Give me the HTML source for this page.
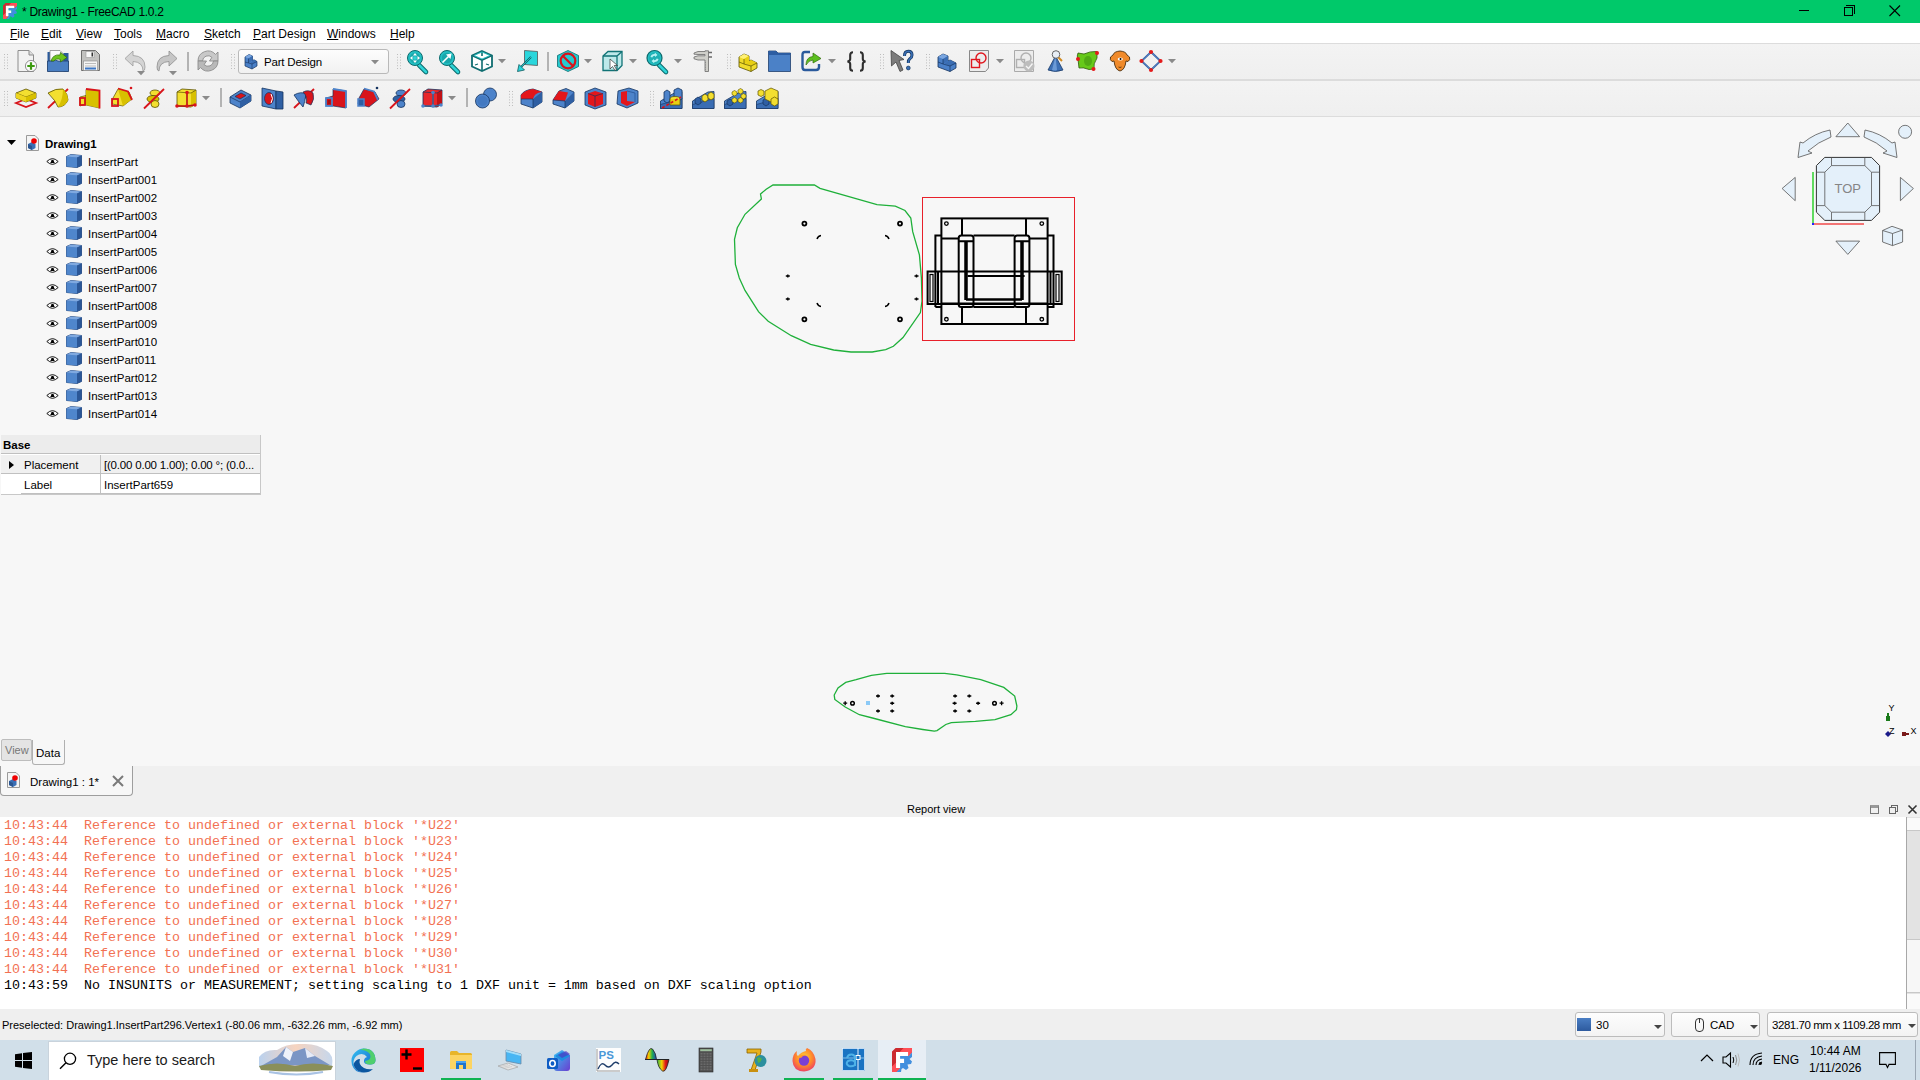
<!DOCTYPE html><html><head><meta charset="utf-8"><style>
*{margin:0;padding:0;box-sizing:border-box}
html,body{width:1920px;height:1080px;overflow:hidden;background:#f7f7f7;font-family:"Liberation Sans",sans-serif;color:#000}
.abs{position:absolute}
.t{position:absolute;white-space:nowrap}
.u{text-decoration:underline;text-underline-offset:1px;text-decoration-thickness:1px}
svg{position:absolute;overflow:visible}
</style></head><body>

<div class="abs" style="left:0;top:0;width:1920px;height:23px;background:#00c96a"></div>
<svg style="left:3px;top:3px" width="14" height="16" viewBox="0 0 20 24" preserveAspectRatio="none"><path d="M0 3.6L3.6 0H20V4.5L16.1 8.4V4.1H4.1V20H8.1L4.5 24H0Z" fill="#cc2a30"/><path d="M11.5 0H20V4.5L16.1 8.4V4.1H7.8Z" fill="#ff5058"/><path d="M0 18.5L4.1 14.5V20H8.1L4.5 24H0Z" fill="#ff5058"/><path d="M4.1 4.1H16.1V8H4.1ZM4.1 8H8.1V20H4.1ZM8.1 10.7H12.1V15.1H8.1Z" fill="#fff"/><path d="M8.1 8H16.5L20 4.5V9L17.5 11L20 13.5L19 16L15.5 16.5L16.5 20L14 22L11 20L9.5 21L9 24H4.5L8.1 20.3V15.1H12.1V10.7H8.1Z" fill="#418fde"/></svg>
<div class="t" style="left:22px;top:4px;font-size:12px;line-height:16px;letter-spacing:-0.3px">* Drawing1 - FreeCAD 1.0.2</div>
<div class="abs" style="left:1799px;top:10px;width:10px;height:1px;background:#000"></div>
<div class="abs" style="left:1844px;top:7px;width:9px;height:9px;border:1px solid #000"></div>
<div class="abs" style="left:1846px;top:5px;width:9px;height:9px;border-top:1px solid #000;border-right:1px solid #000"></div>
<svg style="left:1889px;top:5px" width="12" height="12"><path d="M0.5 0.5L11 11M11 0.5L0.5 11" stroke="#000" stroke-width="1.1"/></svg>
<div class="abs" style="left:0;top:23px;width:1920px;height:20px;background:#fff"></div>
<div class="t" style="left:10px;top:27px;font-size:12px;line-height:15px"><span class="u">F</span>ile</div>
<div class="t" style="left:41px;top:27px;font-size:12px;line-height:15px"><span class="u">E</span>dit</div>
<div class="t" style="left:76px;top:27px;font-size:12px;line-height:15px"><span class="u">V</span>iew</div>
<div class="t" style="left:114px;top:27px;font-size:12px;line-height:15px"><span class="u">T</span>ools</div>
<div class="t" style="left:156px;top:27px;font-size:12px;line-height:15px"><span class="u">M</span>acro</div>
<div class="t" style="left:204px;top:27px;font-size:12px;line-height:15px"><span class="u">S</span>ketch</div>
<div class="t" style="left:253px;top:27px;font-size:12px;line-height:15px"><span class="u">P</span>art Design</div>
<div class="t" style="left:327px;top:27px;font-size:12px;line-height:15px"><span class="u">W</span>indows</div>
<div class="t" style="left:390px;top:27px;font-size:12px;line-height:15px"><span class="u">H</span>elp</div>
<div class="abs" style="left:0;top:43px;width:1920px;height:37px;background:linear-gradient(#f3f3f3,#efefef);border-top:1px solid #dcdcdc"></div>
<div class="abs" style="left:0;top:80px;width:1920px;height:37px;background:linear-gradient(#f3f3f3,#efefef)"></div>
<div class="abs" style="left:0;top:79px;width:1920px;height:2px;background:#dcdcdc"></div>
<div class="abs" style="left:0;top:116px;width:1920px;height:1px;background:#dcdcdc"></div>
<svg style="left:4px;top:54px" width="6" height="16" viewBox="0 0 6 16"><rect x="0" y="0" width="1" height="1" fill="#bdbdbd"/><rect x="0" y="2.8" width="1" height="1" fill="#bdbdbd"/><rect x="0" y="5.6" width="1" height="1" fill="#bdbdbd"/><rect x="0" y="8.4" width="1" height="1" fill="#bdbdbd"/><rect x="0" y="11.2" width="1" height="1" fill="#bdbdbd"/><rect x="0" y="14" width="1" height="1" fill="#bdbdbd"/><rect x="3" y="0" width="1" height="1" fill="#bdbdbd"/><rect x="3" y="2.8" width="1" height="1" fill="#bdbdbd"/><rect x="3" y="5.6" width="1" height="1" fill="#bdbdbd"/><rect x="3" y="8.4" width="1" height="1" fill="#bdbdbd"/><rect x="3" y="11.2" width="1" height="1" fill="#bdbdbd"/><rect x="3" y="14" width="1" height="1" fill="#bdbdbd"/></svg>
<svg style="left:17px;top:50px" width="22" height="22" viewBox="0 0 22 22"><path d="M1 0.5H12L16.5 5V21.5H1Z" fill="#f2f2f2" stroke="#8c8c8c"/><path d="M12 0.5V5H16.5" fill="#ddd" stroke="#8c8c8c"/>
<circle cx="14" cy="16" r="5.6" fill="#fafafa" stroke="#777" stroke-width="0.8"/><path d="M14 12.3V19.7M10.3 16H17.7" stroke="#3c9a10" stroke-width="2.2"/></svg>
<svg style="left:47px;top:50px" width="22" height="22" viewBox="0 0 22 22"><path d="M0.5 2H3L3 21.5H0.5Z" fill="#2a5a9c"/><path d="M3 0.5H13L16.5 4V12H3Z" fill="#fafafa" stroke="#888" stroke-width="0.8"/>
<path d="M16.5 3H21.5V21.5H16.5Z" fill="#2a5a9c"/>
<path d="M0.5 11H6Q9 9.5 11 11H21.5V21.5H0.5Z" fill="#4a7fc2" stroke="#1e3e6b" stroke-width="0.8"/>
<path d="M4 11Q6 4 13 5L13.5 2.5L20 7.5L13.5 12L13.5 9.5Q9 8 7 11Z" fill="#6cc41c" stroke="#2e6a08" stroke-width="0.7"/></svg>
<svg style="left:80px;top:50px" width="22" height="22" viewBox="0 0 22 22"><path d="M1.5 0.5H15.5L19.5 4.5V20.5H1.5Z" fill="#c2c2c0" stroke="#6e6e6e"/><rect x="6" y="1.5" width="8" height="6" fill="#f8f8f8" stroke="#999" stroke-width="0.6"/><rect x="11.5" y="2.5" width="1.5" height="4" fill="#333"/>
<rect x="3.5" y="11" width="14" height="9.5" fill="#f4f4f4" stroke="#888" stroke-width="0.6"/><rect x="5" y="13" width="11" height="1" fill="#bbb"/><rect x="5" y="15.5" width="11" height="1" fill="#bbb"/><rect x="5" y="17.5" width="11" height="2" fill="#3c77c6"/></svg>
<svg style="left:113px;top:54px" width="6" height="16" viewBox="0 0 6 16"><rect x="0" y="0" width="1" height="1" fill="#bdbdbd"/><rect x="0" y="2.8" width="1" height="1" fill="#bdbdbd"/><rect x="0" y="5.6" width="1" height="1" fill="#bdbdbd"/><rect x="0" y="8.4" width="1" height="1" fill="#bdbdbd"/><rect x="0" y="11.2" width="1" height="1" fill="#bdbdbd"/><rect x="0" y="14" width="1" height="1" fill="#bdbdbd"/><rect x="3" y="0" width="1" height="1" fill="#bdbdbd"/><rect x="3" y="2.8" width="1" height="1" fill="#bdbdbd"/><rect x="3" y="5.6" width="1" height="1" fill="#bdbdbd"/><rect x="3" y="8.4" width="1" height="1" fill="#bdbdbd"/><rect x="3" y="11.2" width="1" height="1" fill="#bdbdbd"/><rect x="3" y="14" width="1" height="1" fill="#bdbdbd"/></svg>
<svg style="left:124px;top:50px" width="22" height="22" viewBox="0 0 22 22"><path d="M1 8.5L9 1V5.5Q21 6 21 17Q21 21 19 21Q19 12 9 11.5V16Z" fill="#d4d4d4" stroke="#9c9c9c" stroke-width="0.8"/></svg>
<svg style="left:137px;top:71px" width="8" height="5" viewBox="0 0 8 5"><path d="M0 0H8L4 4.2Z" fill="#8a8a8a"/></svg>
<svg style="left:156px;top:50px" width="22" height="22" viewBox="0 0 22 22"><path d="M21 8.5L13 1V5.5Q1 6 1 17Q1 21 3 21Q3 12 13 11.5V16Z" fill="#c6c6c6" stroke="#8e8e8e" stroke-width="0.8"/></svg>
<svg style="left:169px;top:71px" width="8" height="5" viewBox="0 0 8 5"><path d="M0 0H8L4 4.2Z" fill="#8a8a8a"/></svg>
<div class="abs" style="left:187px;top:52px;width:2px;height:19px;background:#b3b3b3"></div>
<svg style="left:197px;top:50px" width="22" height="22" viewBox="0 0 22 22"><path d="M1 11A10 10 0 0 1 18.5 4.4L21 2V11H12.5L14.9 7.4A5.5 5.5 0 0 0 5.5 11Z" fill="#c8c8c8" stroke="#8c8c8c" stroke-width="0.9"/>
<path d="M21 11A10 10 0 0 1 3.5 17.6L1 20V11H9.5L7.1 14.6A5.5 5.5 0 0 0 16.5 11Z" fill="#b9b9b9" stroke="#8c8c8c" stroke-width="0.9"/></svg>
<svg style="left:231px;top:54px" width="6" height="16" viewBox="0 0 6 16"><rect x="0" y="0" width="1" height="1" fill="#bdbdbd"/><rect x="0" y="2.8" width="1" height="1" fill="#bdbdbd"/><rect x="0" y="5.6" width="1" height="1" fill="#bdbdbd"/><rect x="0" y="8.4" width="1" height="1" fill="#bdbdbd"/><rect x="0" y="11.2" width="1" height="1" fill="#bdbdbd"/><rect x="0" y="14" width="1" height="1" fill="#bdbdbd"/><rect x="3" y="0" width="1" height="1" fill="#bdbdbd"/><rect x="3" y="2.8" width="1" height="1" fill="#bdbdbd"/><rect x="3" y="5.6" width="1" height="1" fill="#bdbdbd"/><rect x="3" y="8.4" width="1" height="1" fill="#bdbdbd"/><rect x="3" y="11.2" width="1" height="1" fill="#bdbdbd"/><rect x="3" y="14" width="1" height="1" fill="#bdbdbd"/></svg>
<div class="abs" style="left:238px;top:49px;width:151px;height:25px;background:linear-gradient(#fdfdfd,#f1f1f1);border:1px solid #b9b9b9;border-radius:3px"></div>
<svg style="left:244px;top:53px" width="14" height="17" viewBox="0 0 14 17"><path d="M1 4L5 1.5L8.5 3V7.5L10 6.8L13 8.5V13L8 16L1 13Z" fill="#4a80c8" stroke="#15335e" stroke-width="0.7"/><path d="M1 4L5 1.5L8.5 3L4.5 5.5Z" fill="#7aa6e0"/><path d="M4.5 5.5L8.5 3V7.5L4.5 10ZM10 6.8L13 8.5L8 11L6 10Z" fill="#3a6db3"/><path d="M4.5 5.5V10L1 9M4.5 10L8 11V16M8 11L13 8.5" fill="none" stroke="#15335e" stroke-width="0.6"/></svg>
<div class="t" style="left:264px;top:55px;font-size:11.5px;line-height:14px;letter-spacing:-0.2px">Part Design</div>
<svg style="left:371px;top:60px" width="8" height="5" viewBox="0 0 8 5"><path d="M0 0H8L4 4.2Z" fill="#8a8a8a"/></svg>
<svg style="left:397px;top:54px" width="6" height="16" viewBox="0 0 6 16"><rect x="0" y="0" width="1" height="1" fill="#bdbdbd"/><rect x="0" y="2.8" width="1" height="1" fill="#bdbdbd"/><rect x="0" y="5.6" width="1" height="1" fill="#bdbdbd"/><rect x="0" y="8.4" width="1" height="1" fill="#bdbdbd"/><rect x="0" y="11.2" width="1" height="1" fill="#bdbdbd"/><rect x="0" y="14" width="1" height="1" fill="#bdbdbd"/><rect x="3" y="0" width="1" height="1" fill="#bdbdbd"/><rect x="3" y="2.8" width="1" height="1" fill="#bdbdbd"/><rect x="3" y="5.6" width="1" height="1" fill="#bdbdbd"/><rect x="3" y="8.4" width="1" height="1" fill="#bdbdbd"/><rect x="3" y="11.2" width="1" height="1" fill="#bdbdbd"/><rect x="3" y="14" width="1" height="1" fill="#bdbdbd"/></svg>
<svg style="left:406px;top:50px" width="22" height="22" viewBox="0 0 22 22"><path d="M13 15L20 22" stroke="#0c6a6d" stroke-width="4.6" stroke-linecap="round"/><path d="M13 15L20 22" stroke="#2ed3d6" stroke-width="2.6" stroke-linecap="round"/>
<circle cx="9" cy="8" r="7.5" fill="#22bfc3" stroke="#0c6a6d" stroke-width="1"/><circle cx="9" cy="8" r="5.2" fill="#1aa7ab"/>
<path d="M9 3L11 5.5H7ZM9 13L11 10.5H7ZM4 8L6.5 6V10ZM14 8L11.5 6V10Z" fill="#fff"/><rect x="7.3" y="6.3" width="3.4" height="3.4" fill="#2ed3d6"/></svg>
<svg style="left:438px;top:50px" width="22" height="22" viewBox="0 0 22 22"><path d="M13 15L20 22" stroke="#0c6a6d" stroke-width="4.6" stroke-linecap="round"/><path d="M13 15L20 22" stroke="#2ed3d6" stroke-width="2.6" stroke-linecap="round"/>
<circle cx="9" cy="8" r="7.5" fill="#22bfc3" stroke="#0c6a6d" stroke-width="1"/><circle cx="9" cy="8" r="5.2" fill="#1aa7ab"/>
<path d="M4.5 12.5L10.5 6.5" stroke="#fff" stroke-width="1.6"/><path d="M13.5 3.5L8 4.5L12.5 9Z" fill="#fff"/></svg>
<svg style="left:471px;top:50px" width="22" height="22" viewBox="0 0 22 22"><path d="M11 1L21 5.5V16.5L11 21L1 16.5V5.5Z" fill="#fff" stroke="#0f6d70" stroke-width="1.8"/><path d="M1 5.5L11 10L21 5.5M11 10V21M11 1V6" fill="none" stroke="#0f6d70" stroke-width="1.6"/>
<path d="M3 5.5L11 2L19 5.5L11 9Z" fill="none" stroke="#22bfc3" stroke-width="0.9"/><path d="M4 15L7 14M15 14L18 15" stroke="#0f6d70" stroke-width="1.2"/></svg>
<svg style="left:498px;top:59px" width="8" height="5" viewBox="0 0 8 5"><path d="M0 0H8L4 4.2Z" fill="#8a8a8a"/></svg>
<svg style="left:517px;top:50px" width="22" height="22" viewBox="0 0 22 22"><path d="M7.5 0.5L20.5 1.5V15.5L7.5 14.5Z" fill="#2ad6dc" stroke="#555" stroke-width="0.8"/>
<path d="M14 7L3 18" stroke="#0f5b5e" stroke-width="1.8"/><path d="M14 7L3 18" stroke="#2ad6dc" stroke-width="0.8"/><path d="M0.5 21.5L2 14.5L7.5 20Z" fill="#2ad6dc" stroke="#0f5b5e" stroke-width="0.8"/></svg>
<div class="abs" style="left:547px;top:52px;width:2px;height:19px;background:#b3b3b3"></div>
<svg style="left:557px;top:50px" width="22" height="22" viewBox="0 0 22 22"><path d="M11 0.5L21.5 5.5V16.5L11 21.5L0.5 16.5V5.5Z" fill="#24cbd0" stroke="#0c6b6e" stroke-width="0.8"/>
<circle cx="11" cy="11" r="7.3" fill="none" stroke="#d8141b" stroke-width="2.2"/><path d="M6 6L16 16" stroke="#d8141b" stroke-width="2.2"/></svg>
<svg style="left:584px;top:59px" width="8" height="5" viewBox="0 0 8 5"><path d="M0 0H8L4 4.2Z" fill="#8a8a8a"/></svg>
<svg style="left:602px;top:50px" width="22" height="22" viewBox="0 0 22 22"><path d="M1 6L6 1.5H20L20 15.5L15 20.5H1Z" fill="#bde9ea" stroke="#117376" stroke-width="1.3"/><path d="M1 6H15V20.5M15 6L20 1.5" fill="none" stroke="#117376" stroke-width="1.3"/>
<path d="M8 9L8 19L10.5 16.5L13 20.5L14.5 19.5L12.2 15.5L15.5 15.5Z" fill="#fff" stroke="#333" stroke-width="0.7"/></svg>
<svg style="left:629px;top:59px" width="8" height="5" viewBox="0 0 8 5"><path d="M0 0H8L4 4.2Z" fill="#8a8a8a"/></svg>
<svg style="left:645px;top:50px" width="22" height="22" viewBox="0 0 22 22"><path d="M14 15L21 22" stroke="#0c6a6d" stroke-width="4.6" stroke-linecap="round"/><path d="M14 15L21 22" stroke="#2ed3d6" stroke-width="2.6" stroke-linecap="round"/>
<circle cx="9.5" cy="8" r="7.5" fill="#22bfc3" stroke="#0c6a6d" stroke-width="1.2"/><circle cx="9.5" cy="8" r="5.5" fill="#1fb0b4"/>
<path d="M5.5 7Q6 4 9.5 4L10 2.8L12.5 5L10 7L10 5.8Q7.5 6 7.3 7.5Z" fill="#b5f1f2"/><path d="M13.5 9Q13 12 9.5 12L9 13.2L6.5 11L9 9L9 10.2Q11.5 10 11.7 8.5Z" fill="#b5f1f2"/></svg>
<svg style="left:674px;top:59px" width="8" height="5" viewBox="0 0 8 5"><path d="M0 0H8L4 4.2Z" fill="#8a8a8a"/></svg>
<svg style="left:693px;top:50px" width="20" height="22" viewBox="0 0 20 22"><path d="M1 3L5 1.5H12V0.8H15.5V21.5H12V10H5L1 8.8V7L5 5.8H12V4.5H5L1 4.2Z" fill="#cfcfca" stroke="#6a6a6a" stroke-width="0.8"/>
<path d="M15.5 2.5H19M15.5 7H19" stroke="#6a6a6a" stroke-width="1.6"/><path d="M12.5 12V20" stroke="#8a8a8a" stroke-width="1" stroke-dasharray="1 1.4"/></svg>
<svg style="left:727px;top:54px" width="6" height="16" viewBox="0 0 6 16"><rect x="0" y="0" width="1" height="1" fill="#bdbdbd"/><rect x="0" y="2.8" width="1" height="1" fill="#bdbdbd"/><rect x="0" y="5.6" width="1" height="1" fill="#bdbdbd"/><rect x="0" y="8.4" width="1" height="1" fill="#bdbdbd"/><rect x="0" y="11.2" width="1" height="1" fill="#bdbdbd"/><rect x="0" y="14" width="1" height="1" fill="#bdbdbd"/><rect x="3" y="0" width="1" height="1" fill="#bdbdbd"/><rect x="3" y="2.8" width="1" height="1" fill="#bdbdbd"/><rect x="3" y="5.6" width="1" height="1" fill="#bdbdbd"/><rect x="3" y="8.4" width="1" height="1" fill="#bdbdbd"/><rect x="3" y="11.2" width="1" height="1" fill="#bdbdbd"/><rect x="3" y="14" width="1" height="1" fill="#bdbdbd"/></svg>
<svg style="left:738px;top:50px" width="20" height="22" viewBox="0 0 20 22"><path d="M1 7L6 4L11 6V11L13 10L19 13V18L13 21.5L1 17Z" fill="#f0dc2c" stroke="#5a5000" stroke-width="0.8"/>
<path d="M1 7L6 4L11 6L6 9Z" fill="#fff176"/><path d="M6 9L11 6V11L6 14ZM13 10L19 13L13 16L7.5 13.5Z" fill="#e8cf12"/><path d="M6 9V14M1 12L6 14L13 16V21.5M13 16L19 13" fill="none" stroke="#5a5000" stroke-width="0.7"/></svg>
<svg style="left:768px;top:50px" width="23" height="22" viewBox="0 0 23 22"><path d="M0.5 1H8L10 3H22.5V21.5H0.5Z" fill="#4b81c7" stroke="#1f3f6d" stroke-width="0.8"/><path d="M0.5 1H8L10 3H22.5V5H0.5Z" fill="#2c5da2"/></svg>
<svg style="left:801px;top:50px" width="22" height="22" viewBox="0 0 22 22"><path d="M9 2H4Q1.5 2 1.5 5V17Q1.5 20 4 20H15Q18 20 18 17V14" fill="none" stroke="#2a5a9c" stroke-width="2.4"/>
<path d="M5 15Q5 7 12 6.5V3L20 8.5L12 13V10Q8 10 5 15Z" fill="#5cbf1e" stroke="#2e6a08" stroke-width="0.7"/></svg>
<svg style="left:828px;top:59px" width="8" height="5" viewBox="0 0 8 5"><path d="M0 0H8L4 4.2Z" fill="#8a8a8a"/></svg>
<svg style="left:846px;top:51px" width="21" height="21" viewBox="0 0 21 21"><path d="M7 1.2Q4.2 1.2 4.2 4V8Q4.2 10 1.5 10.5Q4.2 11 4.2 13V17Q4.2 19.8 7 19.8M14 1.2Q16.8 1.2 16.8 4V8Q16.8 10 19.5 10.5Q16.8 11 16.8 13V17Q16.8 19.8 14 19.8" fill="none" stroke="#2e2e2e" stroke-width="2.1"/></svg>
<svg style="left:880px;top:54px" width="6" height="16" viewBox="0 0 6 16"><rect x="0" y="0" width="1" height="1" fill="#bdbdbd"/><rect x="0" y="2.8" width="1" height="1" fill="#bdbdbd"/><rect x="0" y="5.6" width="1" height="1" fill="#bdbdbd"/><rect x="0" y="8.4" width="1" height="1" fill="#bdbdbd"/><rect x="0" y="11.2" width="1" height="1" fill="#bdbdbd"/><rect x="0" y="14" width="1" height="1" fill="#bdbdbd"/><rect x="3" y="0" width="1" height="1" fill="#bdbdbd"/><rect x="3" y="2.8" width="1" height="1" fill="#bdbdbd"/><rect x="3" y="5.6" width="1" height="1" fill="#bdbdbd"/><rect x="3" y="8.4" width="1" height="1" fill="#bdbdbd"/><rect x="3" y="11.2" width="1" height="1" fill="#bdbdbd"/><rect x="3" y="14" width="1" height="1" fill="#bdbdbd"/></svg>
<svg style="left:890px;top:50px" width="23" height="22" viewBox="0 0 23 22"><path d="M1 0.5L14 9.5L9 10.5L13 20L10 21.5L6 12L1.5 16Z" fill="#7b7b7b" stroke="#444" stroke-width="0.8"/>
<path d="M14.5 6Q14.5 1.2 18.3 1.2Q22 1.2 22 5Q22 7.5 19.8 8.8Q18.3 9.8 18.3 13" fill="none" stroke="#14365f" stroke-width="3"/><path d="M14.5 6Q14.5 1.2 18.3 1.2Q22 1.2 22 5Q22 7.5 19.8 8.8Q18.3 9.8 18.3 13" fill="none" stroke="#3a6fb5" stroke-width="1.6"/><circle cx="18.3" cy="18" r="1.9" fill="#3a6fb5" stroke="#14365f" stroke-width="0.7"/></svg>
<svg style="left:926px;top:54px" width="6" height="16" viewBox="0 0 6 16"><rect x="0" y="0" width="1" height="1" fill="#bdbdbd"/><rect x="0" y="2.8" width="1" height="1" fill="#bdbdbd"/><rect x="0" y="5.6" width="1" height="1" fill="#bdbdbd"/><rect x="0" y="8.4" width="1" height="1" fill="#bdbdbd"/><rect x="0" y="11.2" width="1" height="1" fill="#bdbdbd"/><rect x="0" y="14" width="1" height="1" fill="#bdbdbd"/><rect x="3" y="0" width="1" height="1" fill="#bdbdbd"/><rect x="3" y="2.8" width="1" height="1" fill="#bdbdbd"/><rect x="3" y="5.6" width="1" height="1" fill="#bdbdbd"/><rect x="3" y="8.4" width="1" height="1" fill="#bdbdbd"/><rect x="3" y="11.2" width="1" height="1" fill="#bdbdbd"/><rect x="3" y="14" width="1" height="1" fill="#bdbdbd"/></svg>
<svg style="left:937px;top:50px" width="20" height="22" viewBox="0 0 20 22"><path d="M1 7L6 4L11 6V11L13 10L19 13V18L13 21.5L1 17Z" fill="#4a80c8" stroke="#15335e" stroke-width="0.8"/>
<path d="M1 7L6 4L11 6L6 9Z" fill="#7aa6e0"/><path d="M6 9L11 6V11L6 14ZM13 10L19 13L13 16L7.5 13.5Z" fill="#3a6db3"/><path d="M6 9V14M1 12L6 14L13 16V21.5M13 16L19 13" fill="none" stroke="#15335e" stroke-width="0.7"/></svg>
<svg style="left:969px;top:50px" width="20" height="22" viewBox="0 0 20 22"><path d="M0.5 0.5H19.5V18L16.5 21.5H0.5Z" fill="#ececec" stroke="#888"/><rect x="2.5" y="9.5" width="8" height="8" fill="none" stroke="#e0161e" stroke-width="1.4"/><circle cx="12" cy="8" r="5" fill="none" stroke="#e0161e" stroke-width="1.4"/></svg>
<svg style="left:996px;top:59px" width="8" height="5" viewBox="0 0 8 5"><path d="M0 0H8L4 4.2Z" fill="#8a8a8a"/></svg>
<svg style="left:1014px;top:50px" width="22" height="22" viewBox="0 0 22 22"><path d="M0.5 0.5H19.5V21.5H0.5Z" fill="#ececec" stroke="#aaa"/><rect x="2.5" y="9.5" width="8" height="8" fill="none" stroke="#b0b0b0" stroke-width="1.4"/><circle cx="12" cy="8" r="5" fill="none" stroke="#b0b0b0" stroke-width="1.4"/>
<circle cx="15" cy="16" r="5.5" fill="#bdbdbd"/><path d="M12 16L14.5 18.5L18.5 13.5" fill="none" stroke="#f4f4f4" stroke-width="1.4"/></svg>
<svg style="left:1047px;top:50px" width="18" height="22" viewBox="0 0 18 22"><path d="M8.5 6L1 20Q8.5 23 16 20Z" fill="#3c6fb4" stroke="#1b3b68" stroke-width="0.8"/><path d="M8.5 6L5 20Q8 21 10 20Z" fill="#6b9ad6"/>
<circle cx="9" cy="4.5" r="3.8" fill="#e8eef5" stroke="#555" stroke-width="0.9"/><path d="M11.5 7.5L15 11" stroke="#d08a20" stroke-width="2"/></svg>
<svg style="left:1076px;top:50px" width="23" height="22" viewBox="0 0 23 22"><path d="M2 3L8 4Q14 1 21 1.5L21 8Q17 14 18 19L13 19.5Q7 17 3 18L2 9Q0.5 6 2 3Z" fill="#66c919" stroke="#2d5a08" stroke-width="0.8"/><ellipse cx="12" cy="11" rx="4" ry="5" fill="#3c8c10" opacity="0.5"/>
<circle cx="21" cy="3" r="2" fill="#e41b1b"/><circle cx="2" cy="9" r="2" fill="#e41b1b"/><circle cx="17.5" cy="19" r="2" fill="#e41b1b"/></svg>
<svg style="left:1109px;top:50px" width="22" height="22" viewBox="0 0 22 22"><path d="M11 1Q5 1.5 4 5L1.5 7Q0.5 10 3 11.5L5 11Q6 20 11 21Q16 20 17 11L19 11.5Q21.5 10 20.5 7L18 5Q17 1.5 11 1Z" fill="#f08a2a" stroke="#3a2000" stroke-width="0.8"/>
<ellipse cx="11.3" cy="9" rx="2.6" ry="1.6" fill="#fff"/><circle cx="11.5" cy="9" r="1" fill="#000"/><path d="M9.5 17Q11 18 12.5 17" stroke="#3a2000" fill="none" stroke-width="0.7"/></svg>
<svg style="left:1140px;top:50px" width="22" height="22" viewBox="0 0 22 22"><path d="M11 2L20.5 11L11 20L1.5 11Z" fill="none" stroke="#2d5aa0" stroke-width="1.8"/><path d="M11 2L20.5 11L11 20L1.5 11Z" fill="none" stroke="#7aa6e0" stroke-width="0.6"/>
<circle cx="11" cy="2" r="2.1" fill="#e41b1b"/><circle cx="20.5" cy="11" r="2.1" fill="#e41b1b"/><circle cx="11" cy="20" r="2.1" fill="#e41b1b"/><circle cx="1.5" cy="11" r="2.1" fill="#e41b1b"/></svg>
<svg style="left:1168px;top:59px" width="8" height="5" viewBox="0 0 8 5"><path d="M0 0H8L4 4.2Z" fill="#8a8a8a"/></svg>
<svg style="left:4px;top:91px" width="6" height="16" viewBox="0 0 6 16"><rect x="0" y="0" width="1" height="1" fill="#bdbdbd"/><rect x="0" y="2.8" width="1" height="1" fill="#bdbdbd"/><rect x="0" y="5.6" width="1" height="1" fill="#bdbdbd"/><rect x="0" y="8.4" width="1" height="1" fill="#bdbdbd"/><rect x="0" y="11.2" width="1" height="1" fill="#bdbdbd"/><rect x="0" y="14" width="1" height="1" fill="#bdbdbd"/><rect x="3" y="0" width="1" height="1" fill="#bdbdbd"/><rect x="3" y="2.8" width="1" height="1" fill="#bdbdbd"/><rect x="3" y="5.6" width="1" height="1" fill="#bdbdbd"/><rect x="3" y="8.4" width="1" height="1" fill="#bdbdbd"/><rect x="3" y="11.2" width="1" height="1" fill="#bdbdbd"/><rect x="3" y="14" width="1" height="1" fill="#bdbdbd"/></svg>
<svg style="left:15px;top:87px" width="22" height="22" viewBox="0 0 22 22"><path d="M1 16L11 12L21 16L11 20Z" fill="none" stroke="#d8141b" stroke-width="1.8"/><path d="M1 6L11 2L21 6V11L11 15L1 11Z" fill="#f3df30" stroke="#5b5000" stroke-width="0.8"/>
<path d="M1 6L11 10L21 6M11 10V15" fill="none" stroke="#5b5000" stroke-width="0.7"/><path d="M11 10L21 6V11L11 15Z" fill="#d8c000"/><path d="M1 6L11 10V15L1 11Z" fill="#eed620"/></svg>
<svg style="left:47px;top:87px" width="22" height="22" viewBox="0 0 22 22"><path d="M1 21L21 2" stroke="#d8141b" stroke-width="1.8"/><path d="M1 6Q9 1 16 2Q21 7 21 13Q18 20 11 20Q9 14 1 6Z" fill="#f3df30" stroke="#5b5000" stroke-width="0.8"/><path d="M16 2Q21 7 21 13Q18 20 11 20Q16 12 16 2Z" fill="#d8c000"/></svg>
<svg style="left:79px;top:87px" width="22" height="22" viewBox="0 0 22 22"><path d="M7 2.5L20.5 4V21L7 18ZM1 10L7 8.5V17L1 19Z" fill="#f3df30" stroke="#5b5000" stroke-width="0.7"/><path d="M7 2.5L20.5 4V21L7 18Z" fill="#d8c000"/><path d="M7 2L20.5 3.5V21.5" fill="none" stroke="#d8141b" stroke-width="1.8"/><rect x="1" y="11" width="5" height="7" fill="none" stroke="#d8141b" stroke-width="1.8"/></svg>
<svg style="left:111px;top:87px" width="22" height="22" viewBox="0 0 22 22"><path d="M7 2L18 5L21 12L12 19L1 17L2 11Z" fill="#f3df30" stroke="#5b5000" stroke-width="0.7"/><path d="M7 2L18 5L21 12L12 19Z" fill="#d8c000"/><path d="M7 1.5L17 4.5L21 13" fill="none" stroke="#d8141b" stroke-width="1.8"/><rect x="1" y="12" width="6" height="7" fill="none" stroke="#d8141b" stroke-width="1.8"/><circle cx="20" cy="1" r="1.3" fill="#d8141b"/></svg>
<svg style="left:143px;top:87px" width="22" height="22" viewBox="0 0 22 22"><ellipse cx="12" cy="6" rx="5" ry="3" fill="#f3df30" stroke="#5b5000" stroke-width="0.8"/><ellipse cx="10" cy="12" rx="6" ry="3.5" fill="#d8c000" stroke="#5b5000" stroke-width="0.8"/><ellipse cx="12" cy="17" rx="4" ry="3.5" fill="#f3df30" stroke="#5b5000" stroke-width="0.8"/><path d="M1 21.5L21 2" stroke="#d8141b" stroke-width="1.8"/></svg>
<svg style="left:175px;top:87px" width="22" height="22" viewBox="0 0 22 22"><path d="M2 5L7 2L21 3V17L16 20L2 19Z" fill="#f3df30" stroke="#5b5000" stroke-width="0.8"/><path d="M16 6L21 3V17L16 20Z" fill="#d8c000"/><path d="M2 5L16 6L21 3" fill="none" stroke="#5b5000" stroke-width="0.7"/>
<path d="M12 5.5V19M2 19H12L20 18" stroke="#b80e14" stroke-width="1.6" fill="none"/><circle cx="12" cy="5.5" r="1.8" fill="#d8141b"/><circle cx="2" cy="19" r="1.8" fill="#d8141b"/><circle cx="12" cy="19" r="1.8" fill="#d8141b"/><circle cx="20" cy="18" r="1.8" fill="#d8141b"/></svg>
<svg style="left:202px;top:96px" width="8" height="5" viewBox="0 0 8 5"><path d="M0 0H8L4 4.2Z" fill="#8a8a8a"/></svg>
<div class="abs" style="left:220px;top:88px;width:2px;height:19px;background:#b3b3b3"></div>
<svg style="left:229px;top:87px" width="22" height="22" viewBox="0 0 22 22"><path d="M1 10L12 3L22 8V14L11 21L1 16Z" fill="#4d83ca" stroke="#15335e" stroke-width="0.8"/><path d="M1 10L11 15L22 8" fill="none" stroke="#15335e" stroke-width="0.7"/><path d="M11 15V21L22 14V8Z" fill="#2f5fa3"/><path d="M6 9.5L12 6L17 8.5L11 12Z" fill="#d8141b" stroke="#15335e" stroke-width="0.7"/></svg>
<svg style="left:261px;top:87px" width="22" height="22" viewBox="0 0 22 22"><path d="M1 1L15 4V22L1 19Z" fill="#4d83ca" stroke="#15335e" stroke-width="0.8"/><path d="M15 4L22 5V22H15Z" fill="#2f5fa3" stroke="#15335e" stroke-width="0.8"/><ellipse cx="8" cy="11.5" rx="4.5" ry="6" fill="#d8141b" stroke="#15335e" stroke-width="0.7"/><path d="M10 7Q13 11.5 10 16" stroke="#fff" stroke-width="1" fill="none"/></svg>
<svg style="left:293px;top:87px" width="22" height="22" viewBox="0 0 22 22"><path d="M1 21L21 2" stroke="#d8141b" stroke-width="1.8"/><path d="M1 8Q8 4 13 7Q12 15 10 20Q5 14 1 8Z" fill="#4d83ca" stroke="#15335e" stroke-width="0.8"/><path d="M10 5Q16 2 20 6Q22 12 18 18L13 16Q15 10 10 5Z" fill="#d8141b" stroke="#15335e" stroke-width="0.7"/></svg>
<svg style="left:325px;top:87px" width="22" height="22" viewBox="0 0 22 22"><path d="M8 2L21 4V21L8 19L1 18V11L8 9Z" fill="#d8141b" stroke="#15335e" stroke-width="0.7"/><path d="M8 2L21 4V21" fill="none" stroke="#4d83ca" stroke-width="1.8"/><rect x="1" y="11" width="6" height="8" fill="none" stroke="#4d83ca" stroke-width="1.8"/><rect x="2.5" y="13" width="3" height="4" fill="#a80c10"/></svg>
<svg style="left:357px;top:87px" width="22" height="22" viewBox="0 0 22 22"><path d="M7 2L18 5L22 12L12 20L1 17L2 11Z" fill="#d8141b" stroke="#15335e" stroke-width="0.7"/><path d="M7 1.5L17 4.5L21 13" fill="none" stroke="#4d83ca" stroke-width="1.8"/><rect x="1" y="12" width="6" height="7" fill="#2f5fa3" stroke="#4d83ca" stroke-width="1.5"/><circle cx="20" cy="1" r="1.3" fill="#15335e"/></svg>
<svg style="left:389px;top:87px" width="22" height="22" viewBox="0 0 22 22"><ellipse cx="12" cy="6" rx="5" ry="3" fill="#4d83ca" stroke="#15335e" stroke-width="0.8"/><ellipse cx="10" cy="12" rx="6" ry="3.5" fill="#2f5fa3" stroke="#15335e" stroke-width="0.8"/><ellipse cx="12" cy="17" rx="4" ry="3.5" fill="#4d83ca" stroke="#15335e" stroke-width="0.8"/><path d="M1 21.5L21 2" stroke="#d8141b" stroke-width="1.8"/></svg>
<svg style="left:421px;top:87px" width="22" height="22" viewBox="0 0 22 22"><path d="M2 5L7 2L21 3V17L16 20L2 19Z" fill="#e8262a" stroke="#15335e" stroke-width="0.8"/><path d="M16 6L21 3V17L16 20Z" fill="#c01015"/><path d="M2 5L16 6L21 3" fill="none" stroke="#15335e" stroke-width="0.7"/>
<path d="M12 5.5V19M2 19H12L20 18" stroke="#3b5f91" stroke-width="1.6" fill="none"/><circle cx="12" cy="5.5" r="1.8" fill="#4d83ca"/><circle cx="2" cy="19" r="1.8" fill="#4d83ca"/><circle cx="12" cy="19" r="1.8" fill="#4d83ca"/><circle cx="20" cy="18" r="1.8" fill="#4d83ca"/></svg>
<svg style="left:448px;top:96px" width="8" height="5" viewBox="0 0 8 5"><path d="M0 0H8L4 4.2Z" fill="#8a8a8a"/></svg>
<div class="abs" style="left:466px;top:88px;width:2px;height:19px;background:#b3b3b3"></div>
<svg style="left:475px;top:87px" width="22" height="22" viewBox="0 0 22 22"><circle cx="15" cy="7.5" r="6.5" fill="#4d83ca" stroke="#15335e" stroke-width="0.8"/><circle cx="7.5" cy="14" r="7" fill="#4d83ca" stroke="#15335e" stroke-width="0.8"/><circle cx="7.5" cy="14" r="5" fill="#3a70b8" opacity="0.5"/></svg>
<svg style="left:509px;top:91px" width="6" height="16" viewBox="0 0 6 16"><rect x="0" y="0" width="1" height="1" fill="#bdbdbd"/><rect x="0" y="2.8" width="1" height="1" fill="#bdbdbd"/><rect x="0" y="5.6" width="1" height="1" fill="#bdbdbd"/><rect x="0" y="8.4" width="1" height="1" fill="#bdbdbd"/><rect x="0" y="11.2" width="1" height="1" fill="#bdbdbd"/><rect x="0" y="14" width="1" height="1" fill="#bdbdbd"/><rect x="3" y="0" width="1" height="1" fill="#bdbdbd"/><rect x="3" y="2.8" width="1" height="1" fill="#bdbdbd"/><rect x="3" y="5.6" width="1" height="1" fill="#bdbdbd"/><rect x="3" y="8.4" width="1" height="1" fill="#bdbdbd"/><rect x="3" y="11.2" width="1" height="1" fill="#bdbdbd"/><rect x="3" y="14" width="1" height="1" fill="#bdbdbd"/></svg>
<svg style="left:520px;top:87px" width="22" height="22" viewBox="0 0 22 22"><path d="M1 8Q4 3 13 2L22 5V15L13 21L1 17Z" fill="#4d83ca" stroke="#15335e" stroke-width="0.8"/><path d="M1 8Q5 3 13 2L22 5Q14 6 13 12L1 12Z" fill="#e3161b"/><path d="M13 12L22 5V15L13 21Z" fill="#2f5fa3"/><path d="M1 12H13V21" fill="none" stroke="#15335e" stroke-width="0.7"/></svg>
<svg style="left:552px;top:87px" width="22" height="22" viewBox="0 0 22 22"><path d="M1 13L7 4L14 1.5L22 5V14L13 21L1 17Z" fill="#4d83ca" stroke="#15335e" stroke-width="0.8"/><path d="M1 13L7 4L16 5.5L13 14Z" fill="#e3161b"/><path d="M13 14L22 5V14L13 21Z" fill="#2f5fa3"/><path d="M1 13L13 14V21" fill="none" stroke="#15335e" stroke-width="0.7"/></svg>
<svg style="left:584px;top:87px" width="22" height="22" viewBox="0 0 22 22"><path d="M1 5L11 1L22 5V18L11 22L1 18Z" fill="#4d83ca" stroke="#15335e" stroke-width="0.8"/><path d="M4 6.5L11 4L19 6.5V17L11 20L4 17Z" fill="#e3161b"/><path d="M11 9V20M4 6.5L11 9L19 6.5" stroke="#15335e" stroke-width="0.7" fill="none"/></svg>
<svg style="left:616px;top:87px" width="22" height="22" viewBox="0 0 22 22"><path d="M2 4L13 1L22 4V16L11 21L1 17Z" fill="#4d83ca" stroke="#15335e" stroke-width="0.8"/><path d="M5 5L11 4V14L19 15L11 19L5 16Z" fill="#e3161b"/><path d="M11 4L19 6V15" fill="none" stroke="#2f5fa3" stroke-width="1"/></svg>
<svg style="left:650px;top:91px" width="6" height="16" viewBox="0 0 6 16"><rect x="0" y="0" width="1" height="1" fill="#bdbdbd"/><rect x="0" y="2.8" width="1" height="1" fill="#bdbdbd"/><rect x="0" y="5.6" width="1" height="1" fill="#bdbdbd"/><rect x="0" y="8.4" width="1" height="1" fill="#bdbdbd"/><rect x="0" y="11.2" width="1" height="1" fill="#bdbdbd"/><rect x="0" y="14" width="1" height="1" fill="#bdbdbd"/><rect x="3" y="0" width="1" height="1" fill="#bdbdbd"/><rect x="3" y="2.8" width="1" height="1" fill="#bdbdbd"/><rect x="3" y="5.6" width="1" height="1" fill="#bdbdbd"/><rect x="3" y="8.4" width="1" height="1" fill="#bdbdbd"/><rect x="3" y="11.2" width="1" height="1" fill="#bdbdbd"/><rect x="3" y="14" width="1" height="1" fill="#bdbdbd"/></svg>
<svg style="left:660px;top:87px" width="22" height="22" viewBox="0 0 22 22"><path d="M0.5 14L16 5L22 4.5V21.5H0.5Z" fill="#4d83ca" stroke="#15335e" stroke-width="0.8"/><path d="M0.5 17.5L22 11.5V21.5H0.5Z" fill="#3a6db3" stroke="#15335e" stroke-width="0.6"/><path d="M4 5L7 3L10 5V14L7 16L4 14Z" fill="#4d83ca" stroke="#15335e" stroke-width="0.8"/><path d="M14 3L18 1L22 3V12L14 16Z" fill="#4d83ca" stroke="#15335e" stroke-width="0.8"/><ellipse cx="15" cy="12" rx="5" ry="2.5" fill="#f3df30" stroke="#5b5000" stroke-width="0.7"/><path d="M10 12V18L20 18V12" fill="#e8cf12" stroke="#5b5000" stroke-width="0.7"/><path d="M2 21L21 10" stroke="#d8141b" stroke-width="1.5" stroke-dasharray="3 2"/></svg>
<svg style="left:692px;top:87px" width="22" height="22" viewBox="0 0 22 22"><path d="M0.5 14L16 5L22 4.5V21.5H0.5Z" fill="#4d83ca" stroke="#15335e" stroke-width="0.8"/><path d="M0.5 17.5L22 11.5V21.5H0.5Z" fill="#3a6db3" stroke="#15335e" stroke-width="0.6"/><path d="M3 12L6 10L9 12V16L6 18L3 16Z" fill="#2f5fa3" stroke="#15335e" stroke-width="0.7"/><path d="M10 9L13 7L16 9V13L13 15L10 13Z" fill="#f3df30" stroke="#5b5000" stroke-width="0.7"/><path d="M16 7L19 5L22 7V11L19 13L16 11Z" fill="#f3df30" stroke="#5b5000" stroke-width="0.7"/></svg>
<svg style="left:724px;top:87px" width="22" height="22" viewBox="0 0 22 22"><path d="M0.5 14L16 5L22 4.5V21.5H0.5Z" fill="#4d83ca" stroke="#15335e" stroke-width="0.8"/><path d="M0.5 17.5L22 11.5V21.5H0.5Z" fill="#3a6db3" stroke="#15335e" stroke-width="0.6"/><path d="M3 14L6 12L9 14V17L6 19L3 17Z" fill="#2f5fa3" stroke="#15335e" stroke-width="0.7"/>
<g fill="#f3df30" stroke="#5b5000" stroke-width="0.6"><path d="M8 5L10.5 3.5L13 5V7.5L10.5 9L8 7.5Z"/><path d="M14 3L16.5 1.5L19 3V5.5L16.5 7L14 5.5Z"/><path d="M17 8L19.5 6.5L22 8V10.5L19.5 12L17 10.5Z"/><path d="M14 12L16.5 10.5L19 12V14.5L16.5 16L14 14.5Z"/><path d="M8 12L10.5 10.5L13 12V14.5L10.5 16L8 14.5Z"/></g></svg>
<svg style="left:756px;top:87px" width="22" height="22" viewBox="0 0 22 22"><path d="M0.5 14L16 5L22 4.5V21.5H0.5Z" fill="#4d83ca" stroke="#15335e" stroke-width="0.8"/><path d="M0.5 17.5L22 11.5V21.5H0.5Z" fill="#3a6db3" stroke="#15335e" stroke-width="0.6"/><path d="M7 13L10 11L13 13V17L10 19L7 17Z" fill="#2f5fa3" stroke="#15335e" stroke-width="0.7"/>
<g fill="#f3df30" stroke="#5b5000" stroke-width="0.7"><path d="M2 4L5 2.5L8 4V8L5 9.5L2 8Z"/><path d="M9 4L15 1L22 4V12L15 15L9 12Z"/><path d="M15 12L18.5 10L22 12V17L18.5 19L15 17Z"/></g></svg>
<div class="abs" style="left:0;top:117px;width:1920px;height:649px;background:#f7f7f7"></div>
<svg style="left:0;top:0" width="1920" height="1080"><path d="M773.0 185.0 L814.4 185.0 L820.0 188.3 L877.0 204.7 L895.3 206.2 L905.0 210.5 L910.8 218.0 L912.7 231.7 L919.4 254.8 L921.4 277.9 L922.0 301.0 L920.4 312.6 L903.0 337.6 L893.4 346.3 L885.7 349.6 L872.2 352.0 L851.0 352.0 L833.7 350.0 L810.6 344.4 L791.3 335.7 L768.2 321.3 L758.5 311.6 L745.0 290.4 L739.3 277.9 L735.4 264.4 L734.5 239.4 L737.3 227.8 L745.0 214.3 L761.4 198.9 L760.5 194.0 L766.2 189.3Z" fill="none" stroke="#1fb03a" stroke-width="1.3"/><path d="M886.7 673.3 L944.7 673.3 L956.8 674.8 L980.8 679.7 L1003.8 687.4 L1014.7 696.1 L1016.9 706.0 L1016.4 709.8 L1010.9 714.7 L995.0 719.6 L975.4 721.3 L951.3 722.6 L945.8 724.5 L937.0 730.6 L934.3 731.1 L922.8 729.5 L905.3 726.7 L872.5 718.0 L859.4 714.7 L845.2 707.0 L834.8 699.4 L834.2 695.0 L838.0 687.9 L845.7 682.4 L856.1 679.7 L871.4 675.3Z" fill="none" stroke="#1fb03a" stroke-width="1.3"/><rect x="922.5" y="197.5" width="152" height="143" fill="none" stroke="#e8202a" stroke-width="1"/><g stroke="#000" fill="none" stroke-width="2"><rect x="941.4" y="218.4" width="106.2" height="105.6"/><path d="M935.4 307V235.6H941.4M1047.6 235.6H1053.5V307H1047.6M935.4 307H941.4"/><path d="M941.4 238.4H959M1029.4 238.4H1047.6M941.4 303.4H959M1029.4 303.4H1047.6"/><rect x="927.6" y="271.5" width="134.1" height="32.5"/><path d="M962 218.4V235.6M1026 218.4V235.6M962 307V324M1026 307V324"/><rect x="958.7" y="235.6" width="14.8" height="71.4" rx="2.5"/><rect x="1014.6" y="235.6" width="14.8" height="71.4" rx="2.5"/><path d="M973.5 235.6H1014.6M973.5 307H1014.6"/><path d="M958.7 241.2H973.5M1014.6 241.2H1029.4M958.7 303.4H1029.4"/><path d="M967.6 276H1024.6M938 271.5V304M1050.5 271.5V304"/><rect x="930" y="274.5" width="3" height="27" stroke-width="1.2"/><rect x="1056" y="274.5" width="3" height="27" stroke-width="1.2"/></g><path d="M966 242V300M1022 242V300" stroke="#000" stroke-width="3.5"/><path d="M966 299.5H1022" stroke="#000" stroke-width="2.5"/><circle cx="946.4" cy="223.6" r="1.8" fill="none" stroke="#000" stroke-width="1.3"/><circle cx="1041.8" cy="223.6" r="1.8" fill="none" stroke="#000" stroke-width="1.3"/><circle cx="946.4" cy="319.3" r="1.8" fill="none" stroke="#000" stroke-width="1.3"/><circle cx="1041.8" cy="319.3" r="1.8" fill="none" stroke="#000" stroke-width="1.3"/><circle cx="804.4" cy="223.6" r="2" fill="none" stroke="#000" stroke-width="1.8"/><circle cx="900" cy="223.6" r="2" fill="none" stroke="#000" stroke-width="1.8"/><circle cx="804.4" cy="319.3" r="2" fill="none" stroke="#000" stroke-width="1.8"/><circle cx="900" cy="319.3" r="2" fill="none" stroke="#000" stroke-width="1.8"/><path d="M817 239Q818 236 821 235.5M889 239Q888 236 885 235.5M817 303Q818 306 821 306.5M889 303Q888 306 885 306.5" stroke="#000" stroke-width="1.5" fill="none"/><path d="M785.8 276H789.8M787.8 274.5V277.5" stroke="#000" stroke-width="1.4"/><path d="M785.8 299H789.8M787.8 297.5V300.5" stroke="#000" stroke-width="1.4"/><path d="M914.5 276H918.5M916.5 274.5V277.5" stroke="#000" stroke-width="1.4"/><path d="M914.5 299H918.5M916.5 297.5V300.5" stroke="#000" stroke-width="1.4"/><path d="M843.2 703.2H847.2M845.2 701.2V705.2" stroke="#000" stroke-width="1.3"/><path d="M999.6 703.2H1003.6M1001.6 701.2V705.2" stroke="#000" stroke-width="1.3"/><circle cx="852.5" cy="703.2" r="1.8" fill="none" stroke="#000" stroke-width="1.5"/><circle cx="994.5" cy="703.2" r="1.8" fill="none" stroke="#000" stroke-width="1.5"/><rect x="866" y="701" width="4" height="4" fill="#8ccaf7"/><path d="M876 696H880M878 694.5V697.5" stroke="#000" stroke-width="1.6"/><path d="M890.2 696H894.2M892.2 694.5V697.5" stroke="#000" stroke-width="1.6"/><path d="M890.2 703.2H894.2M892.2 701.7V704.7" stroke="#000" stroke-width="1.6"/><path d="M876 711H880M878 709.5V712.5" stroke="#000" stroke-width="1.6"/><path d="M890.2 711H894.2M892.2 709.5V712.5" stroke="#000" stroke-width="1.6"/><path d="M953.1 696H957.1M955.1 694.5V697.5" stroke="#000" stroke-width="1.6"/><path d="M967.3 696H971.3M969.3 694.5V697.5" stroke="#000" stroke-width="1.6"/><path d="M952.6 703.2H956.6M954.6 701.7V704.7" stroke="#000" stroke-width="1.6"/><path d="M976.1 703.2H980.1M978.1 701.7V704.7" stroke="#000" stroke-width="1.6"/><path d="M953.1 711H957.1M955.1 709.5V712.5" stroke="#000" stroke-width="1.6"/><path d="M967.3 711H971.3M969.3 709.5V712.5" stroke="#000" stroke-width="1.6"/></svg>
<svg style="left:0;top:0" width="1920" height="1080"><path d="M1824.8 157.4 L1871.5 157.4 L1879.6 165.6 L1879.6 212.2 L1871.5 220.4 L1824.8 220.4 L1816.4 212.2 L1816.4 165.6Z" fill="#e4f0fa" stroke="#333" stroke-width="1"/><path d="M1831.5 165.6 L1864.8 165.6 L1871.5 172.2 L1871.5 205.6 L1864.8 212.2 L1831.5 212.2 L1824.8 205.6 L1824.8 172.2Z" fill="#e4f0fa" stroke="#555" stroke-width="0.8"/><path d="M1831.5 157.4V165.6M1864.8 157.4V165.6M1831.5 220.4V212.2M1864.8 220.4V212.2M1816.4 172.2H1824.8M1816.4 205.6H1824.8M1879.6 172.2H1871.5M1879.6 205.6H1871.5" stroke="#555" stroke-width="0.8"/><text x="1847.8" y="193.3" text-anchor="middle" font-family="Liberation Sans" font-size="13" fill="#858585">TOP</text><path d="M1835.9 136.7L1847.8 123L1859.6 136.7Z" fill="#e4f0fa" stroke="#555" stroke-width="0.8"/><path d="M1835.9 241.1L1859.6 241.1L1847.8 254.4Z" fill="#e4f0fa" stroke="#555" stroke-width="0.8"/><path d="M1795.2 177.4L1782.1 188.5L1795.2 200.7Z" fill="#e4f0fa" stroke="#555" stroke-width="0.8"/><path d="M1900.4 177.4L1913.4 188.5L1900.4 200.7Z" fill="#e4f0fa" stroke="#555" stroke-width="0.8"/><circle cx="1905.1" cy="131.8" r="6.5" fill="#e4f0fa" stroke="#555" stroke-width="0.8"/><path d="M1830 130Q1815 133 1803 143L1800 142L1798 157.5L1812 153L1808 151Q1818 142 1831 137Z" fill="#e4f0fa" stroke="#555" stroke-width="0.8"/><path d="M1865 130Q1880 133 1892 143L1895 142L1897 157.5L1883 153L1887 151Q1877 142 1864 137Z" fill="#e4f0fa" stroke="#555" stroke-width="0.8"/><path d="M1882.6 230.5L1892 226.3L1902.6 230V242L1892.5 245.6L1882.6 242Z" fill="#e4f0fa" stroke="#555" stroke-width="0.8"/><path d="M1882.6 230.5L1892.5 233.5L1902.6 230M1892.5 233.5V245.6" fill="none" stroke="#555" stroke-width="0.8"/><path d="M1813 172V224" stroke="#3ad23a" stroke-width="1.6"/><path d="M1813 224H1864" stroke="#f04a4a" stroke-width="1.6"/><rect x="1812" y="223" width="2" height="2" fill="#2222ff"/></svg>
<svg style="left:0;top:0" width="1920" height="1080"><text x="1888.5" y="711" font-family="Liberation Sans" font-size="9" fill="#000">Y</text><rect x="1886" y="716" width="4" height="5" fill="#1a7a1a"/><rect x="1887" y="713" width="2" height="4" fill="#1a7a1a"/><text x="1889" y="733.5" font-family="Liberation Sans" font-size="9" fill="#000">Z</text><path d="M1888 731L1891 734L1888 737L1885 734Z" fill="#1a1a8a"/><rect x="1902" y="732" width="4" height="4" fill="#7a1a1a"/><rect x="1905" y="733" width="4" height="2" fill="#7a1a1a"/><text x="1910.5" y="733.5" font-family="Liberation Sans" font-size="9" fill="#000">X</text></svg>
<svg style="left:7px;top:140px" width="9" height="5"><path d="M0 0H9L4.5 5Z" fill="#000"/></svg>
<svg style="left:26px;top:135px" width="13" height="16" viewBox="0 0 13 16">
<path d="M0.5 0.5H9L12.5 4V15.5H0.5Z" fill="#f4f4f4" stroke="#9a9a9a"/>
<path d="M2 9L6 7L9.5 9V13L6 15L2 13Z" fill="#3a6fb5"/><path d="M2 9L6 11V15L2 13Z" fill="#2a5590"/>
<circle cx="8" cy="6" r="2.8" fill="#e00"/></svg>
<div class="t" style="left:45px;top:137px;font-size:11.5px;line-height:14px;font-weight:bold">Drawing1</div>
<svg style="left:46px;top:157px" width="13" height="9" viewBox="0 0 13 9">
<path d="M0.8 4.5Q6.5 -1.2 12.2 4.5Q6.5 10.2 0.8 4.5Z" fill="none" stroke="#000" stroke-width="0.9"/>
<circle cx="6.5" cy="4.2" r="1.5" fill="#000"/><rect x="4.5" y="5" width="4" height="1" fill="#000"/></svg>
<svg style="left:66px;top:154px" width="16" height="14" viewBox="0 0 16 14">
<path d="M0.5 2.5L5 0.5L15.5 1.5V11.5L11 13.5L0.5 12.5Z" fill="#3b6db3" stroke="#1e3f73" stroke-width="0.8"/>
<path d="M0.5 2.5L11 3.5V13.5L0.5 12.5Z" fill="#4f86cc"/><path d="M0.5 2.5L5 0.5L15.5 1.5L11 3.5Z" fill="#7fa9e0"/>
<path d="M11 3.5L15.5 1.5V11.5L11 13.5Z" fill="#2b5797"/></svg>
<div class="t" style="left:88px;top:155px;font-size:11.5px;line-height:14px">InsertPart</div>
<svg style="left:46px;top:175px" width="13" height="9" viewBox="0 0 13 9">
<path d="M0.8 4.5Q6.5 -1.2 12.2 4.5Q6.5 10.2 0.8 4.5Z" fill="none" stroke="#000" stroke-width="0.9"/>
<circle cx="6.5" cy="4.2" r="1.5" fill="#000"/><rect x="4.5" y="5" width="4" height="1" fill="#000"/></svg>
<svg style="left:66px;top:172px" width="16" height="14" viewBox="0 0 16 14">
<path d="M0.5 2.5L5 0.5L15.5 1.5V11.5L11 13.5L0.5 12.5Z" fill="#3b6db3" stroke="#1e3f73" stroke-width="0.8"/>
<path d="M0.5 2.5L11 3.5V13.5L0.5 12.5Z" fill="#4f86cc"/><path d="M0.5 2.5L5 0.5L15.5 1.5L11 3.5Z" fill="#7fa9e0"/>
<path d="M11 3.5L15.5 1.5V11.5L11 13.5Z" fill="#2b5797"/></svg>
<div class="t" style="left:88px;top:173px;font-size:11.5px;line-height:14px">InsertPart001</div>
<svg style="left:46px;top:193px" width="13" height="9" viewBox="0 0 13 9">
<path d="M0.8 4.5Q6.5 -1.2 12.2 4.5Q6.5 10.2 0.8 4.5Z" fill="none" stroke="#000" stroke-width="0.9"/>
<circle cx="6.5" cy="4.2" r="1.5" fill="#000"/><rect x="4.5" y="5" width="4" height="1" fill="#000"/></svg>
<svg style="left:66px;top:190px" width="16" height="14" viewBox="0 0 16 14">
<path d="M0.5 2.5L5 0.5L15.5 1.5V11.5L11 13.5L0.5 12.5Z" fill="#3b6db3" stroke="#1e3f73" stroke-width="0.8"/>
<path d="M0.5 2.5L11 3.5V13.5L0.5 12.5Z" fill="#4f86cc"/><path d="M0.5 2.5L5 0.5L15.5 1.5L11 3.5Z" fill="#7fa9e0"/>
<path d="M11 3.5L15.5 1.5V11.5L11 13.5Z" fill="#2b5797"/></svg>
<div class="t" style="left:88px;top:191px;font-size:11.5px;line-height:14px">InsertPart002</div>
<svg style="left:46px;top:211px" width="13" height="9" viewBox="0 0 13 9">
<path d="M0.8 4.5Q6.5 -1.2 12.2 4.5Q6.5 10.2 0.8 4.5Z" fill="none" stroke="#000" stroke-width="0.9"/>
<circle cx="6.5" cy="4.2" r="1.5" fill="#000"/><rect x="4.5" y="5" width="4" height="1" fill="#000"/></svg>
<svg style="left:66px;top:208px" width="16" height="14" viewBox="0 0 16 14">
<path d="M0.5 2.5L5 0.5L15.5 1.5V11.5L11 13.5L0.5 12.5Z" fill="#3b6db3" stroke="#1e3f73" stroke-width="0.8"/>
<path d="M0.5 2.5L11 3.5V13.5L0.5 12.5Z" fill="#4f86cc"/><path d="M0.5 2.5L5 0.5L15.5 1.5L11 3.5Z" fill="#7fa9e0"/>
<path d="M11 3.5L15.5 1.5V11.5L11 13.5Z" fill="#2b5797"/></svg>
<div class="t" style="left:88px;top:209px;font-size:11.5px;line-height:14px">InsertPart003</div>
<svg style="left:46px;top:229px" width="13" height="9" viewBox="0 0 13 9">
<path d="M0.8 4.5Q6.5 -1.2 12.2 4.5Q6.5 10.2 0.8 4.5Z" fill="none" stroke="#000" stroke-width="0.9"/>
<circle cx="6.5" cy="4.2" r="1.5" fill="#000"/><rect x="4.5" y="5" width="4" height="1" fill="#000"/></svg>
<svg style="left:66px;top:226px" width="16" height="14" viewBox="0 0 16 14">
<path d="M0.5 2.5L5 0.5L15.5 1.5V11.5L11 13.5L0.5 12.5Z" fill="#3b6db3" stroke="#1e3f73" stroke-width="0.8"/>
<path d="M0.5 2.5L11 3.5V13.5L0.5 12.5Z" fill="#4f86cc"/><path d="M0.5 2.5L5 0.5L15.5 1.5L11 3.5Z" fill="#7fa9e0"/>
<path d="M11 3.5L15.5 1.5V11.5L11 13.5Z" fill="#2b5797"/></svg>
<div class="t" style="left:88px;top:227px;font-size:11.5px;line-height:14px">InsertPart004</div>
<svg style="left:46px;top:247px" width="13" height="9" viewBox="0 0 13 9">
<path d="M0.8 4.5Q6.5 -1.2 12.2 4.5Q6.5 10.2 0.8 4.5Z" fill="none" stroke="#000" stroke-width="0.9"/>
<circle cx="6.5" cy="4.2" r="1.5" fill="#000"/><rect x="4.5" y="5" width="4" height="1" fill="#000"/></svg>
<svg style="left:66px;top:244px" width="16" height="14" viewBox="0 0 16 14">
<path d="M0.5 2.5L5 0.5L15.5 1.5V11.5L11 13.5L0.5 12.5Z" fill="#3b6db3" stroke="#1e3f73" stroke-width="0.8"/>
<path d="M0.5 2.5L11 3.5V13.5L0.5 12.5Z" fill="#4f86cc"/><path d="M0.5 2.5L5 0.5L15.5 1.5L11 3.5Z" fill="#7fa9e0"/>
<path d="M11 3.5L15.5 1.5V11.5L11 13.5Z" fill="#2b5797"/></svg>
<div class="t" style="left:88px;top:245px;font-size:11.5px;line-height:14px">InsertPart005</div>
<svg style="left:46px;top:265px" width="13" height="9" viewBox="0 0 13 9">
<path d="M0.8 4.5Q6.5 -1.2 12.2 4.5Q6.5 10.2 0.8 4.5Z" fill="none" stroke="#000" stroke-width="0.9"/>
<circle cx="6.5" cy="4.2" r="1.5" fill="#000"/><rect x="4.5" y="5" width="4" height="1" fill="#000"/></svg>
<svg style="left:66px;top:262px" width="16" height="14" viewBox="0 0 16 14">
<path d="M0.5 2.5L5 0.5L15.5 1.5V11.5L11 13.5L0.5 12.5Z" fill="#3b6db3" stroke="#1e3f73" stroke-width="0.8"/>
<path d="M0.5 2.5L11 3.5V13.5L0.5 12.5Z" fill="#4f86cc"/><path d="M0.5 2.5L5 0.5L15.5 1.5L11 3.5Z" fill="#7fa9e0"/>
<path d="M11 3.5L15.5 1.5V11.5L11 13.5Z" fill="#2b5797"/></svg>
<div class="t" style="left:88px;top:263px;font-size:11.5px;line-height:14px">InsertPart006</div>
<svg style="left:46px;top:283px" width="13" height="9" viewBox="0 0 13 9">
<path d="M0.8 4.5Q6.5 -1.2 12.2 4.5Q6.5 10.2 0.8 4.5Z" fill="none" stroke="#000" stroke-width="0.9"/>
<circle cx="6.5" cy="4.2" r="1.5" fill="#000"/><rect x="4.5" y="5" width="4" height="1" fill="#000"/></svg>
<svg style="left:66px;top:280px" width="16" height="14" viewBox="0 0 16 14">
<path d="M0.5 2.5L5 0.5L15.5 1.5V11.5L11 13.5L0.5 12.5Z" fill="#3b6db3" stroke="#1e3f73" stroke-width="0.8"/>
<path d="M0.5 2.5L11 3.5V13.5L0.5 12.5Z" fill="#4f86cc"/><path d="M0.5 2.5L5 0.5L15.5 1.5L11 3.5Z" fill="#7fa9e0"/>
<path d="M11 3.5L15.5 1.5V11.5L11 13.5Z" fill="#2b5797"/></svg>
<div class="t" style="left:88px;top:281px;font-size:11.5px;line-height:14px">InsertPart007</div>
<svg style="left:46px;top:301px" width="13" height="9" viewBox="0 0 13 9">
<path d="M0.8 4.5Q6.5 -1.2 12.2 4.5Q6.5 10.2 0.8 4.5Z" fill="none" stroke="#000" stroke-width="0.9"/>
<circle cx="6.5" cy="4.2" r="1.5" fill="#000"/><rect x="4.5" y="5" width="4" height="1" fill="#000"/></svg>
<svg style="left:66px;top:298px" width="16" height="14" viewBox="0 0 16 14">
<path d="M0.5 2.5L5 0.5L15.5 1.5V11.5L11 13.5L0.5 12.5Z" fill="#3b6db3" stroke="#1e3f73" stroke-width="0.8"/>
<path d="M0.5 2.5L11 3.5V13.5L0.5 12.5Z" fill="#4f86cc"/><path d="M0.5 2.5L5 0.5L15.5 1.5L11 3.5Z" fill="#7fa9e0"/>
<path d="M11 3.5L15.5 1.5V11.5L11 13.5Z" fill="#2b5797"/></svg>
<div class="t" style="left:88px;top:299px;font-size:11.5px;line-height:14px">InsertPart008</div>
<svg style="left:46px;top:319px" width="13" height="9" viewBox="0 0 13 9">
<path d="M0.8 4.5Q6.5 -1.2 12.2 4.5Q6.5 10.2 0.8 4.5Z" fill="none" stroke="#000" stroke-width="0.9"/>
<circle cx="6.5" cy="4.2" r="1.5" fill="#000"/><rect x="4.5" y="5" width="4" height="1" fill="#000"/></svg>
<svg style="left:66px;top:316px" width="16" height="14" viewBox="0 0 16 14">
<path d="M0.5 2.5L5 0.5L15.5 1.5V11.5L11 13.5L0.5 12.5Z" fill="#3b6db3" stroke="#1e3f73" stroke-width="0.8"/>
<path d="M0.5 2.5L11 3.5V13.5L0.5 12.5Z" fill="#4f86cc"/><path d="M0.5 2.5L5 0.5L15.5 1.5L11 3.5Z" fill="#7fa9e0"/>
<path d="M11 3.5L15.5 1.5V11.5L11 13.5Z" fill="#2b5797"/></svg>
<div class="t" style="left:88px;top:317px;font-size:11.5px;line-height:14px">InsertPart009</div>
<svg style="left:46px;top:337px" width="13" height="9" viewBox="0 0 13 9">
<path d="M0.8 4.5Q6.5 -1.2 12.2 4.5Q6.5 10.2 0.8 4.5Z" fill="none" stroke="#000" stroke-width="0.9"/>
<circle cx="6.5" cy="4.2" r="1.5" fill="#000"/><rect x="4.5" y="5" width="4" height="1" fill="#000"/></svg>
<svg style="left:66px;top:334px" width="16" height="14" viewBox="0 0 16 14">
<path d="M0.5 2.5L5 0.5L15.5 1.5V11.5L11 13.5L0.5 12.5Z" fill="#3b6db3" stroke="#1e3f73" stroke-width="0.8"/>
<path d="M0.5 2.5L11 3.5V13.5L0.5 12.5Z" fill="#4f86cc"/><path d="M0.5 2.5L5 0.5L15.5 1.5L11 3.5Z" fill="#7fa9e0"/>
<path d="M11 3.5L15.5 1.5V11.5L11 13.5Z" fill="#2b5797"/></svg>
<div class="t" style="left:88px;top:335px;font-size:11.5px;line-height:14px">InsertPart010</div>
<svg style="left:46px;top:355px" width="13" height="9" viewBox="0 0 13 9">
<path d="M0.8 4.5Q6.5 -1.2 12.2 4.5Q6.5 10.2 0.8 4.5Z" fill="none" stroke="#000" stroke-width="0.9"/>
<circle cx="6.5" cy="4.2" r="1.5" fill="#000"/><rect x="4.5" y="5" width="4" height="1" fill="#000"/></svg>
<svg style="left:66px;top:352px" width="16" height="14" viewBox="0 0 16 14">
<path d="M0.5 2.5L5 0.5L15.5 1.5V11.5L11 13.5L0.5 12.5Z" fill="#3b6db3" stroke="#1e3f73" stroke-width="0.8"/>
<path d="M0.5 2.5L11 3.5V13.5L0.5 12.5Z" fill="#4f86cc"/><path d="M0.5 2.5L5 0.5L15.5 1.5L11 3.5Z" fill="#7fa9e0"/>
<path d="M11 3.5L15.5 1.5V11.5L11 13.5Z" fill="#2b5797"/></svg>
<div class="t" style="left:88px;top:353px;font-size:11.5px;line-height:14px">InsertPart011</div>
<svg style="left:46px;top:373px" width="13" height="9" viewBox="0 0 13 9">
<path d="M0.8 4.5Q6.5 -1.2 12.2 4.5Q6.5 10.2 0.8 4.5Z" fill="none" stroke="#000" stroke-width="0.9"/>
<circle cx="6.5" cy="4.2" r="1.5" fill="#000"/><rect x="4.5" y="5" width="4" height="1" fill="#000"/></svg>
<svg style="left:66px;top:370px" width="16" height="14" viewBox="0 0 16 14">
<path d="M0.5 2.5L5 0.5L15.5 1.5V11.5L11 13.5L0.5 12.5Z" fill="#3b6db3" stroke="#1e3f73" stroke-width="0.8"/>
<path d="M0.5 2.5L11 3.5V13.5L0.5 12.5Z" fill="#4f86cc"/><path d="M0.5 2.5L5 0.5L15.5 1.5L11 3.5Z" fill="#7fa9e0"/>
<path d="M11 3.5L15.5 1.5V11.5L11 13.5Z" fill="#2b5797"/></svg>
<div class="t" style="left:88px;top:371px;font-size:11.5px;line-height:14px">InsertPart012</div>
<svg style="left:46px;top:391px" width="13" height="9" viewBox="0 0 13 9">
<path d="M0.8 4.5Q6.5 -1.2 12.2 4.5Q6.5 10.2 0.8 4.5Z" fill="none" stroke="#000" stroke-width="0.9"/>
<circle cx="6.5" cy="4.2" r="1.5" fill="#000"/><rect x="4.5" y="5" width="4" height="1" fill="#000"/></svg>
<svg style="left:66px;top:388px" width="16" height="14" viewBox="0 0 16 14">
<path d="M0.5 2.5L5 0.5L15.5 1.5V11.5L11 13.5L0.5 12.5Z" fill="#3b6db3" stroke="#1e3f73" stroke-width="0.8"/>
<path d="M0.5 2.5L11 3.5V13.5L0.5 12.5Z" fill="#4f86cc"/><path d="M0.5 2.5L5 0.5L15.5 1.5L11 3.5Z" fill="#7fa9e0"/>
<path d="M11 3.5L15.5 1.5V11.5L11 13.5Z" fill="#2b5797"/></svg>
<div class="t" style="left:88px;top:389px;font-size:11.5px;line-height:14px">InsertPart013</div>
<svg style="left:46px;top:409px" width="13" height="9" viewBox="0 0 13 9">
<path d="M0.8 4.5Q6.5 -1.2 12.2 4.5Q6.5 10.2 0.8 4.5Z" fill="none" stroke="#000" stroke-width="0.9"/>
<circle cx="6.5" cy="4.2" r="1.5" fill="#000"/><rect x="4.5" y="5" width="4" height="1" fill="#000"/></svg>
<svg style="left:66px;top:406px" width="16" height="14" viewBox="0 0 16 14">
<path d="M0.5 2.5L5 0.5L15.5 1.5V11.5L11 13.5L0.5 12.5Z" fill="#3b6db3" stroke="#1e3f73" stroke-width="0.8"/>
<path d="M0.5 2.5L11 3.5V13.5L0.5 12.5Z" fill="#4f86cc"/><path d="M0.5 2.5L5 0.5L15.5 1.5L11 3.5Z" fill="#7fa9e0"/>
<path d="M11 3.5L15.5 1.5V11.5L11 13.5Z" fill="#2b5797"/></svg>
<div class="t" style="left:88px;top:407px;font-size:11.5px;line-height:14px">InsertPart014</div>
<div class="abs" style="left:1px;top:435px;width:260px;height:60px;background:#fff;border:1px solid #c8c8c8;border-left:none"></div>
<div class="abs" style="left:1px;top:435px;width:259px;height:19px;background:#ececec;border-bottom:1px solid #c0c0c0"></div>
<div class="t" style="left:3px;top:438px;font-size:11.5px;line-height:14px;font-weight:bold">Base</div>
<div class="abs" style="left:1px;top:455px;width:259px;height:19px;background:#f0f0f0;border-bottom:1px solid #c0c0c0"></div>
<div class="abs" style="left:21px;top:474px;width:239px;height:20px;border-bottom:1px solid #c0c0c0"></div>
<div class="abs" style="left:100px;top:455px;width:1px;height:39px;background:#c0c0c0"></div>
<svg style="left:9px;top:461px" width="5" height="8"><path d="M0 0L5 4L0 8Z" fill="#000"/></svg>
<div class="t" style="left:24px;top:458px;font-size:11.5px;line-height:14px">Placement</div>
<div class="t" style="left:104px;top:458px;font-size:11.5px;line-height:14px;letter-spacing:-0.2px">[(0.00 0.00 1.00); 0.00 °; (0.0...</div>
<div class="t" style="left:24px;top:478px;font-size:11.5px;line-height:14px">Label</div>
<div class="t" style="left:104px;top:478px;font-size:11.5px;line-height:14px">InsertPart659</div>
<div class="abs" style="left:1px;top:739px;width:31px;height:22px;background:#e4e4e4;border:1px solid #bdbdbd;border-radius:2px"></div>
<div class="t" style="left:5px;top:744px;font-size:11px;line-height:13px;color:#777">View</div>
<div class="abs" style="left:32px;top:740px;width:33px;height:25px;background:#f7f7f7;border:1px solid #b0b0b0;border-top:none;border-radius:0 0 3px 3px"></div>
<div class="t" style="left:36px;top:746px;font-size:11.5px;line-height:14px">Data</div>
<div class="abs" style="left:0;top:766px;width:1920px;height:31px;background:#f0f0f0"></div>
<div class="abs" style="left:0;top:766px;width:133px;height:30px;background:#f7f7f7;border:1px solid #9e9e9e;border-top:none;border-radius:0 0 4px 4px"></div>
<svg style="left:7px;top:772px" width="13" height="16" viewBox="0 0 13 16">
<path d="M0.5 0.5H9L12.5 4V15.5H0.5Z" fill="#f4f4f4" stroke="#9a9a9a"/>
<path d="M2 9L6 7L9.5 9V13L6 15L2 13Z" fill="#3a6fb5"/><path d="M2 9L6 11V15L2 13Z" fill="#2a5590"/>
<circle cx="8" cy="6" r="2.8" fill="#e00"/></svg>
<div class="t" style="left:30px;top:775px;font-size:11.5px;line-height:14px">Drawing1 : 1*</div>
<svg style="left:112px;top:775px" width="12" height="12"><path d="M1 1L11 11M11 1L1 11" stroke="#7a7a7a" stroke-width="2"/></svg>
<div class="abs" style="left:0;top:797px;width:1920px;height:20px;background:#f0f0f0"></div>
<div class="t" style="left:907px;top:803px;font-size:11px;line-height:13px">Report view</div>
<div class="abs" style="left:1870px;top:805px;width:9px;height:9px;border:1px solid #777;border-top:3px solid #999"></div>
<div class="abs" style="left:1889px;top:805px;width:9px;height:9px"><div class="abs" style="left:2px;top:0;width:7px;height:7px;border:1px solid #666"></div><div class="abs" style="left:0;top:2px;width:7px;height:7px;border:1px solid #666;background:#f0f0f0"></div></div>
<svg style="left:1908px;top:805px" width="9" height="9"><path d="M0.5 0.5L8.5 8.5M8.5 0.5L0.5 8.5" stroke="#333" stroke-width="1.6"/></svg>
<div class="abs" style="left:0;top:817px;width:1906px;height:192px;background:#fff"></div>
<div class="t" style="left:4px;top:818px;font-family:'Liberation Mono', monospace;font-size:13.33px;line-height:16px;color:#f27152;white-space:pre">10:43:44  Reference to undefined or external block '*U22'</div>
<div class="t" style="left:4px;top:834px;font-family:'Liberation Mono', monospace;font-size:13.33px;line-height:16px;color:#f27152;white-space:pre">10:43:44  Reference to undefined or external block '*U23'</div>
<div class="t" style="left:4px;top:850px;font-family:'Liberation Mono', monospace;font-size:13.33px;line-height:16px;color:#f27152;white-space:pre">10:43:44  Reference to undefined or external block '*U24'</div>
<div class="t" style="left:4px;top:866px;font-family:'Liberation Mono', monospace;font-size:13.33px;line-height:16px;color:#f27152;white-space:pre">10:43:44  Reference to undefined or external block '*U25'</div>
<div class="t" style="left:4px;top:882px;font-family:'Liberation Mono', monospace;font-size:13.33px;line-height:16px;color:#f27152;white-space:pre">10:43:44  Reference to undefined or external block '*U26'</div>
<div class="t" style="left:4px;top:898px;font-family:'Liberation Mono', monospace;font-size:13.33px;line-height:16px;color:#f27152;white-space:pre">10:43:44  Reference to undefined or external block '*U27'</div>
<div class="t" style="left:4px;top:914px;font-family:'Liberation Mono', monospace;font-size:13.33px;line-height:16px;color:#f27152;white-space:pre">10:43:44  Reference to undefined or external block '*U28'</div>
<div class="t" style="left:4px;top:930px;font-family:'Liberation Mono', monospace;font-size:13.33px;line-height:16px;color:#f27152;white-space:pre">10:43:44  Reference to undefined or external block '*U29'</div>
<div class="t" style="left:4px;top:946px;font-family:'Liberation Mono', monospace;font-size:13.33px;line-height:16px;color:#f27152;white-space:pre">10:43:44  Reference to undefined or external block '*U30'</div>
<div class="t" style="left:4px;top:962px;font-family:'Liberation Mono', monospace;font-size:13.33px;line-height:16px;color:#f27152;white-space:pre">10:43:44  Reference to undefined or external block '*U31'</div>
<div class="t" style="left:4px;top:978px;font-family:'Liberation Mono', monospace;font-size:13.33px;line-height:16px;color:#000;white-space:pre">10:43:59  No INSUNITS or MEASUREMENT; setting scaling to 1 DXF unit = 1mm based on DXF scaling option</div>
<div class="abs" style="left:1906px;top:817px;width:14px;height:192px;background:#e3e3e3;border-left:1px solid #a8a8a8"></div>
<div class="abs" style="left:1907px;top:818px;width:13px;height:13px;background:#fafafa;border-bottom:1px solid #c8c8c8"></div>
<div class="abs" style="left:1907px;top:939px;width:13px;height:54px;background:#f7f7f7;border-top:1px solid #c8c8c8;border-bottom:1px solid #c8c8c8"></div>
<div class="abs" style="left:1907px;top:994px;width:13px;height:15px;background:#fafafa"></div>
<div class="abs" style="left:0;top:1009px;width:1920px;height:31px;background:#efefef"></div>
<div class="t" style="left:2px;top:1018px;font-size:11px;line-height:14px">Preselected: Drawing1.InsertPart296.Vertex1 (-80.06 mm, -632.26 mm, -6.92 mm)</div>
<div class="abs" style="left:1575px;top:1012px;width:90px;height:25px;background:linear-gradient(#fdfdfd,#f3f3f3);border:1px solid #bcbcbc;border-radius:3px"></div>
<div class="abs" style="left:1671px;top:1012px;width:89px;height:25px;background:linear-gradient(#fdfdfd,#f3f3f3);border:1px solid #bcbcbc;border-radius:3px"></div>
<div class="abs" style="left:1767px;top:1012px;width:151px;height:25px;background:linear-gradient(#fdfdfd,#f3f3f3);border:1px solid #bcbcbc;border-radius:3px"></div>
<div class="abs" style="left:1577px;top:1018px;width:14px;height:13px;background:linear-gradient(#4a7ec4,#2d5a9e)"></div>
<div class="t" style="left:1596px;top:1018px;font-size:11.5px;line-height:14px">30</div>
<svg style="left:1654px;top:1025px" width="8" height="4"><path d="M0 0H8L4 4Z" fill="#444"/></svg>
<div class="abs" style="left:1695px;top:1018px;width:9px;height:14px;border:1.5px solid #333;border-radius:4px"></div>
<div class="abs" style="left:1699px;top:1019px;width:1px;height:4px;background:#333"></div>
<div class="t" style="left:1710px;top:1018px;font-size:11.5px;line-height:14px">CAD</div>
<svg style="left:1750px;top:1025px" width="8" height="4"><path d="M0 0H8L4 4Z" fill="#444"/></svg>
<div class="t" style="left:1772px;top:1018px;font-size:11.5px;line-height:14px;letter-spacing:-0.45px">3281.70 mm x 1109.28 mm</div>
<svg style="left:1908px;top:1024px" width="8" height="4"><path d="M0 0H8L4 4Z" fill="#444"/></svg>
<div class="abs" style="left:0;top:1040px;width:1920px;height:40px;background:#d1dfe9"></div>
<svg style="left:15px;top:1052px" width="17" height="17" viewBox="0 0 17 17"><path d="M0 2.3L7 1.3V8H0ZM8 1.1L17 0V8H8ZM0 9H7V15.7L0 14.7ZM8 9H17V17L8 15.9Z" fill="#000"/></svg>
<div class="abs" style="left:48px;top:1041px;width:288px;height:39px;background:#fff;border:1px solid #c9d3dc;border-bottom:none"></div>
<svg style="left:59px;top:1052px" width="18" height="18" viewBox="0 0 18 18"><circle cx="11" cy="6.8" r="5.6" fill="none" stroke="#000" stroke-width="1.3"/><path d="M7 10.8L1 16.8" stroke="#000" stroke-width="1.4"/></svg>
<div class="t" style="left:87px;top:1051px;font-size:14.5px;line-height:18px;color:#1b1b1b">Type here to search</div>
<svg style="left:257px;top:1041px" width="78" height="38" viewBox="0 0 78 38"><defs><linearGradient id="sky" x1="0" y1="0" x2="1" y2="0"><stop offset="0" stop-color="#a9c6ea"/><stop offset="0.5" stop-color="#f4c9b0"/><stop offset="1" stop-color="#b7cde8"/></linearGradient></defs>
<path d="M2 16Q8 8 20 9Q30 2 45 3Q60 2 70 10Q77 14 75 25Q60 31 38 30Q12 31 2 26Z" fill="url(#sky)" opacity="0.8"/>
<path d="M4 25L20 16L29 6L36 11L48 7L58 15L73 24Z" fill="#7b96c5"/><path d="M29 6L36 11L33 20L26 15Z" fill="#eef2fa"/><path d="M48 7L58 15L50 17Z" fill="#e6ebf7"/>
<path d="M2 25Q20 20 38 25Q55 20 76 25L74 29Q40 32 4 29Z" fill="#8a8f5a"/><path d="M12 31Q40 36 66 31" stroke="#a9c2e3" stroke-width="2" fill="none"/></svg>
<svg style="left:351px;top:1048px" width="25" height="25" viewBox="0 0 25 25"><defs><linearGradient id="eg" x1="0" y1="0" x2="1" y2="1"><stop offset="0" stop-color="#35c1f1"/><stop offset="0.6" stop-color="#1f84d8"/><stop offset="1" stop-color="#0c59a4"/></linearGradient></defs>
<path d="M12.5 0.5Q24 0.5 24.5 12Q24.5 16.5 19 16.5Q12 16.5 13 12Q13.5 9.5 16 9Q13 5 8 6.5Q2 9 2.5 16Q3.5 23 12 24.5Q4 25 1 17Q-1 9 4 4.5Q8 0.5 12.5 0.5Z" fill="url(#eg)"/>
<path d="M12.5 0.5Q24 0.5 24.5 12Q24.5 16.5 19 16.5Q14 16.5 14 13Q21 12 19 6Q15 1.5 9 2Z" fill="#4fcf6d"/>
<path d="M2.5 16Q3.5 23 12 24.5Q18 25 22 21Q17 22 13 20Q7 17 9 11Q5 11 2.5 16Z" fill="#0b56a0"/></svg>
<svg style="left:400px;top:1048px" width="24" height="24" viewBox="0 0 24 24"><rect width="24" height="24" fill="#ff0000"/><path d="M1.5 6.5H11.5M6.5 1.5V11.5" stroke="#000" stroke-width="2.4"/><path d="M13 20.5H22" stroke="#000" stroke-width="2.4"/></svg>
<svg style="left:450px;top:1051px" width="22" height="18" viewBox="0 0 22 18"><path d="M0 1.5Q0 0 1.5 0H7L9 2H20.5Q22 2 22 3.5V16.5Q22 18 20.5 18H1.5Q0 18 0 16.5Z" fill="#e8b52a"/><path d="M0 4H22V16.5Q22 18 20.5 18H1.5Q0 18 0 16.5Z" fill="#fcd462"/>
<path d="M6 18V11H16V18H13V14H9V18Z" fill="#1f74cc"/><rect x="6" y="10" width="10" height="2" fill="#49a3f0"/></svg>
<div class="abs" style="left:441px;top:1078px;width:40px;height:2px;background:#0fb352"></div>
<svg style="left:498px;top:1050px" width="24" height="21" viewBox="0 0 24 21"><path d="M8 0L23 4V14L8 11Z" fill="#49b6f3" stroke="#6a8aa8" stroke-width="0.8"/><path d="M8 0L23 4V6L8 2Z" fill="#a5def9"/>
<path d="M0 16L10 13L20 17L10 20Z" fill="#e6e6e6" stroke="#9a9a9a" stroke-width="0.6"/><path d="M2 16.5L10 14.5M4 17.5L12 15.5M6 18.5L14 16.5" stroke="#bbb" stroke-width="0.5"/></svg>
<svg style="left:547px;top:1049px" width="24" height="23" viewBox="0 0 24 23"><defs><linearGradient id="og" x1="0" y1="0" x2="1" y2="1"><stop offset="0" stop-color="#39c5f5"/><stop offset="1" stop-color="#6a3dd0"/></linearGradient></defs>
<path d="M7 6L15 1L23 6V19Q23 22 20 22H10Q7 22 7 19Z" fill="url(#og)"/><path d="M8 7L15 3L23 7L15 12Z" fill="#1d8de0"/><path d="M11 6L19 2L23 5L15 9Z" fill="#4d3bc3" opacity="0.7"/>
<rect x="0" y="9" width="11" height="11" rx="1.5" fill="#0f5dc4"/><ellipse cx="5.5" cy="14.5" rx="2.7" ry="3" fill="none" stroke="#fff" stroke-width="1.6"/></svg>
<svg style="left:596px;top:1048px" width="25" height="24" viewBox="0 0 25 24"><rect x="0" y="0" width="25" height="24" fill="#fdfdfd"/><path d="M1 1V23H24" stroke="#999" stroke-width="1" fill="none"/>
<text x="2.5" y="11" font-family="Liberation Sans" font-weight="bold" font-size="11.5" fill="#4a97d7">PS</text>
<path d="M2 21Q5.5 13 9 17Q12.5 21 16 17Q19.5 12 23 16" stroke="#1f3d6a" stroke-width="1.4" fill="none"/></svg>
<svg style="left:645px;top:1048px" width="24" height="24" viewBox="0 0 24 24"><defs><linearGradient id="rb" x1="0" y1="0" x2="1" y2="0"><stop offset="0" stop-color="#e01919"/><stop offset="0.3" stop-color="#f5d200"/><stop offset="0.6" stop-color="#23b14d"/><stop offset="1" stop-color="#2042c8"/></linearGradient>
<linearGradient id="rb2" x1="0" y1="0" x2="1" y2="0"><stop offset="0" stop-color="#23b14d"/><stop offset="0.4" stop-color="#f5d200"/><stop offset="0.7" stop-color="#e01919"/><stop offset="1" stop-color="#901010"/></linearGradient></defs>
<path d="M0.5 11.5Q4 -2 7.5 1Q11 5 11.5 11.5Z" fill="url(#rb)" stroke="#222" stroke-width="0.8"/><path d="M12 11.5H24Q21 25 17.5 23Q13 20 12 11.5Z" fill="url(#rb2)" stroke="#222" stroke-width="0.8"/>
<path d="M0 11.5H24" stroke="#222" stroke-width="1"/></svg>
<svg style="left:699px;top:1048px" width="14" height="24" viewBox="0 0 14 24"><rect x="0" y="0" width="14" height="24" fill="#505050" stroke="#2a2a2a" stroke-width="0.6"/><rect x="1.2" y="1.2" width="11.6" height="2" fill="#9fbf9f"/>
<g fill="#6a6a6a"><rect x="1.5" y="5.0" width="2" height="1.6"/><rect x="1.5" y="7.6" width="2" height="1.6"/><rect x="1.5" y="10.2" width="2" height="1.6"/><rect x="1.5" y="12.8" width="2" height="1.6"/><rect x="1.5" y="15.4" width="2" height="1.6"/><rect x="1.5" y="18.0" width="2" height="1.6"/><rect x="1.5" y="20.6" width="2" height="1.6"/><rect x="4.5" y="5.0" width="2" height="1.6"/><rect x="4.5" y="7.6" width="2" height="1.6"/><rect x="4.5" y="10.2" width="2" height="1.6"/><rect x="4.5" y="12.8" width="2" height="1.6"/><rect x="4.5" y="15.4" width="2" height="1.6"/><rect x="4.5" y="18.0" width="2" height="1.6"/><rect x="4.5" y="20.6" width="2" height="1.6"/><rect x="7.5" y="5.0" width="2" height="1.6"/><rect x="7.5" y="7.6" width="2" height="1.6"/><rect x="7.5" y="10.2" width="2" height="1.6"/><rect x="7.5" y="12.8" width="2" height="1.6"/><rect x="7.5" y="15.4" width="2" height="1.6"/><rect x="7.5" y="18.0" width="2" height="1.6"/><rect x="7.5" y="20.6" width="2" height="1.6"/><rect x="10.5" y="5.0" width="2" height="1.6"/><rect x="10.5" y="7.6" width="2" height="1.6"/><rect x="10.5" y="10.2" width="2" height="1.6"/><rect x="10.5" y="12.8" width="2" height="1.6"/><rect x="10.5" y="15.4" width="2" height="1.6"/><rect x="10.5" y="18.0" width="2" height="1.6"/><rect x="10.5" y="20.6" width="2" height="1.6"/></g></svg>
<svg style="left:746px;top:1048px" width="21" height="24" viewBox="0 0 21 24"><path d="M1 1H15V4L9 22H5L11 5H1Z" fill="#e8b21c" stroke="#8a6200" stroke-width="0.8"/><path d="M3 21H12V24H3Z" fill="#c99010"/>
<circle cx="14.5" cy="13" r="6" fill="#2b8f9f"/><path d="M11 10Q14 8 16 11Q15 14 12 15Z" fill="#55b04a"/></svg>
<svg style="left:792px;top:1048px" width="24" height="24" viewBox="0 0 24 24"><defs><radialGradient id="ff" cx="0.5" cy="0.4" r="0.7"><stop offset="0" stop-color="#ffd43b"/><stop offset="0.5" stop-color="#ff8a2b"/><stop offset="1" stop-color="#e8267a"/></radialGradient></defs>
<path d="M12 23.5Q1 23 0.5 13Q0.5 6 5 3Q4 7 6 8Q9 4 14 3Q13 1.5 15 0Q22 3 23.5 11Q24.5 22 12 23.5Z" fill="url(#ff)"/>
<circle cx="12" cy="12.5" r="5.2" fill="#7b3fd6"/><path d="M6.5 9Q9 6 14 7Q10 8 9 10Z" fill="#ff9a2b"/></svg>
<div class="abs" style="left:784px;top:1078px;width:40px;height:2px;background:#0fb352"></div>
<svg style="left:842px;top:1048px" width="23" height="23" viewBox="0 0 23 23"><rect width="23" height="23" fill="#1a73c2"/><rect x="0.5" y="0.5" width="22" height="22" fill="none" stroke="#e9f4ff" stroke-width="0.8"/>
<path d="M0 10H23" stroke="#9fd0f0" stroke-width="0.8"/><path d="M16 0V23" stroke="#e9f4ff" stroke-width="1"/><rect x="14" y="7.5" width="4" height="4" fill="#1a73c2" stroke="#fff" stroke-width="1"/>
<path d="M5 10Q6 6 10 6.5Q13 7 13 10V18M13 14Q10 11 6 13Q3 16 7 18Q10 19 13 17" stroke="#4fb2e8" stroke-width="2" fill="none"/></svg>
<div class="abs" style="left:833px;top:1078px;width:40px;height:2px;background:#0fb352"></div>
<div class="abs" style="left:878px;top:1040px;width:48px;height:40px;background:#e7eef5"></div>
<svg style="left:892px;top:1048px" width="20" height="24" viewBox="0 0 20 24"><path d="M0 3.6L3.6 0H20V4.5L16.1 8.4V4.1H4.1V20H8.1L4.5 24H0Z" fill="#cc2a30"/><path d="M11.5 0H20V4.5L16.1 8.4V4.1H7.8Z" fill="#ff5058"/><path d="M0 18.5L4.1 14.5V20H8.1L4.5 24H0Z" fill="#ff5058"/><path d="M4.1 4.1H16.1V8H4.1ZM4.1 8H8.1V20H4.1ZM8.1 10.7H12.1V15.1H8.1Z" fill="#fff"/><path d="M8.1 8H16.5L20 4.5V9L17.5 11L20 13.5L19 16L15.5 16.5L16.5 20L14 22L11 20L9.5 21L9 24H4.5L8.1 20.3V15.1H12.1V10.7H8.1Z" fill="#418fde"/></svg>
<div class="abs" style="left:878px;top:1078px;width:48px;height:2px;background:#0fb352"></div>
<svg style="left:1700px;top:1054px" width="14" height="8" viewBox="0 0 14 8"><path d="M1 7L7 1L13 7" fill="none" stroke="#000" stroke-width="1.2"/></svg>
<svg style="left:1722px;top:1052px" width="18" height="16" viewBox="0 0 18 16"><path d="M1 5H4L8.5 1V15L4 11H1Z" fill="none" stroke="#000" stroke-width="1.1"/><path d="M11 5Q12.5 8 11 11" stroke="#000" fill="none" stroke-width="1"/><path d="M13.5 3Q16 8 13.5 13" stroke="#888" fill="none" stroke-width="1"/><path d="M16 1.5Q19 8 16 14.5" stroke="#bbb" fill="none" stroke-width="1"/></svg>
<svg style="left:1749px;top:1052px" width="14" height="14" viewBox="0 0 14 14"><path d="M1 13Q1 2 13 1M4 13Q4 5 13 4M7 13Q7 8 13 7M10 13Q10 11 13 10" stroke="#000" fill="none" stroke-width="1.1"/><circle cx="11.5" cy="11.5" r="1.4" fill="#000"/></svg>
<div class="t" style="left:1773px;top:1053px;font-size:12px;line-height:15px;color:#000">ENG</div>
<div class="t" style="left:1810px;top:1044px;font-size:12px;line-height:15px;color:#000">10:44 AM</div>
<div class="t" style="left:1809px;top:1061px;font-size:12px;line-height:15px;color:#000">1/11/2026</div>
<svg style="left:1879px;top:1052px" width="17" height="17" viewBox="0 0 17 17"><path d="M0.6 0.6H16.4V12.4H10L8.5 15.5L7 12.4H0.6Z" fill="none" stroke="#000" stroke-width="1.1"/></svg>
<div class="abs" style="left:1915px;top:1040px;width:1px;height:40px;background:#9aa6b3"></div>
</body></html>
